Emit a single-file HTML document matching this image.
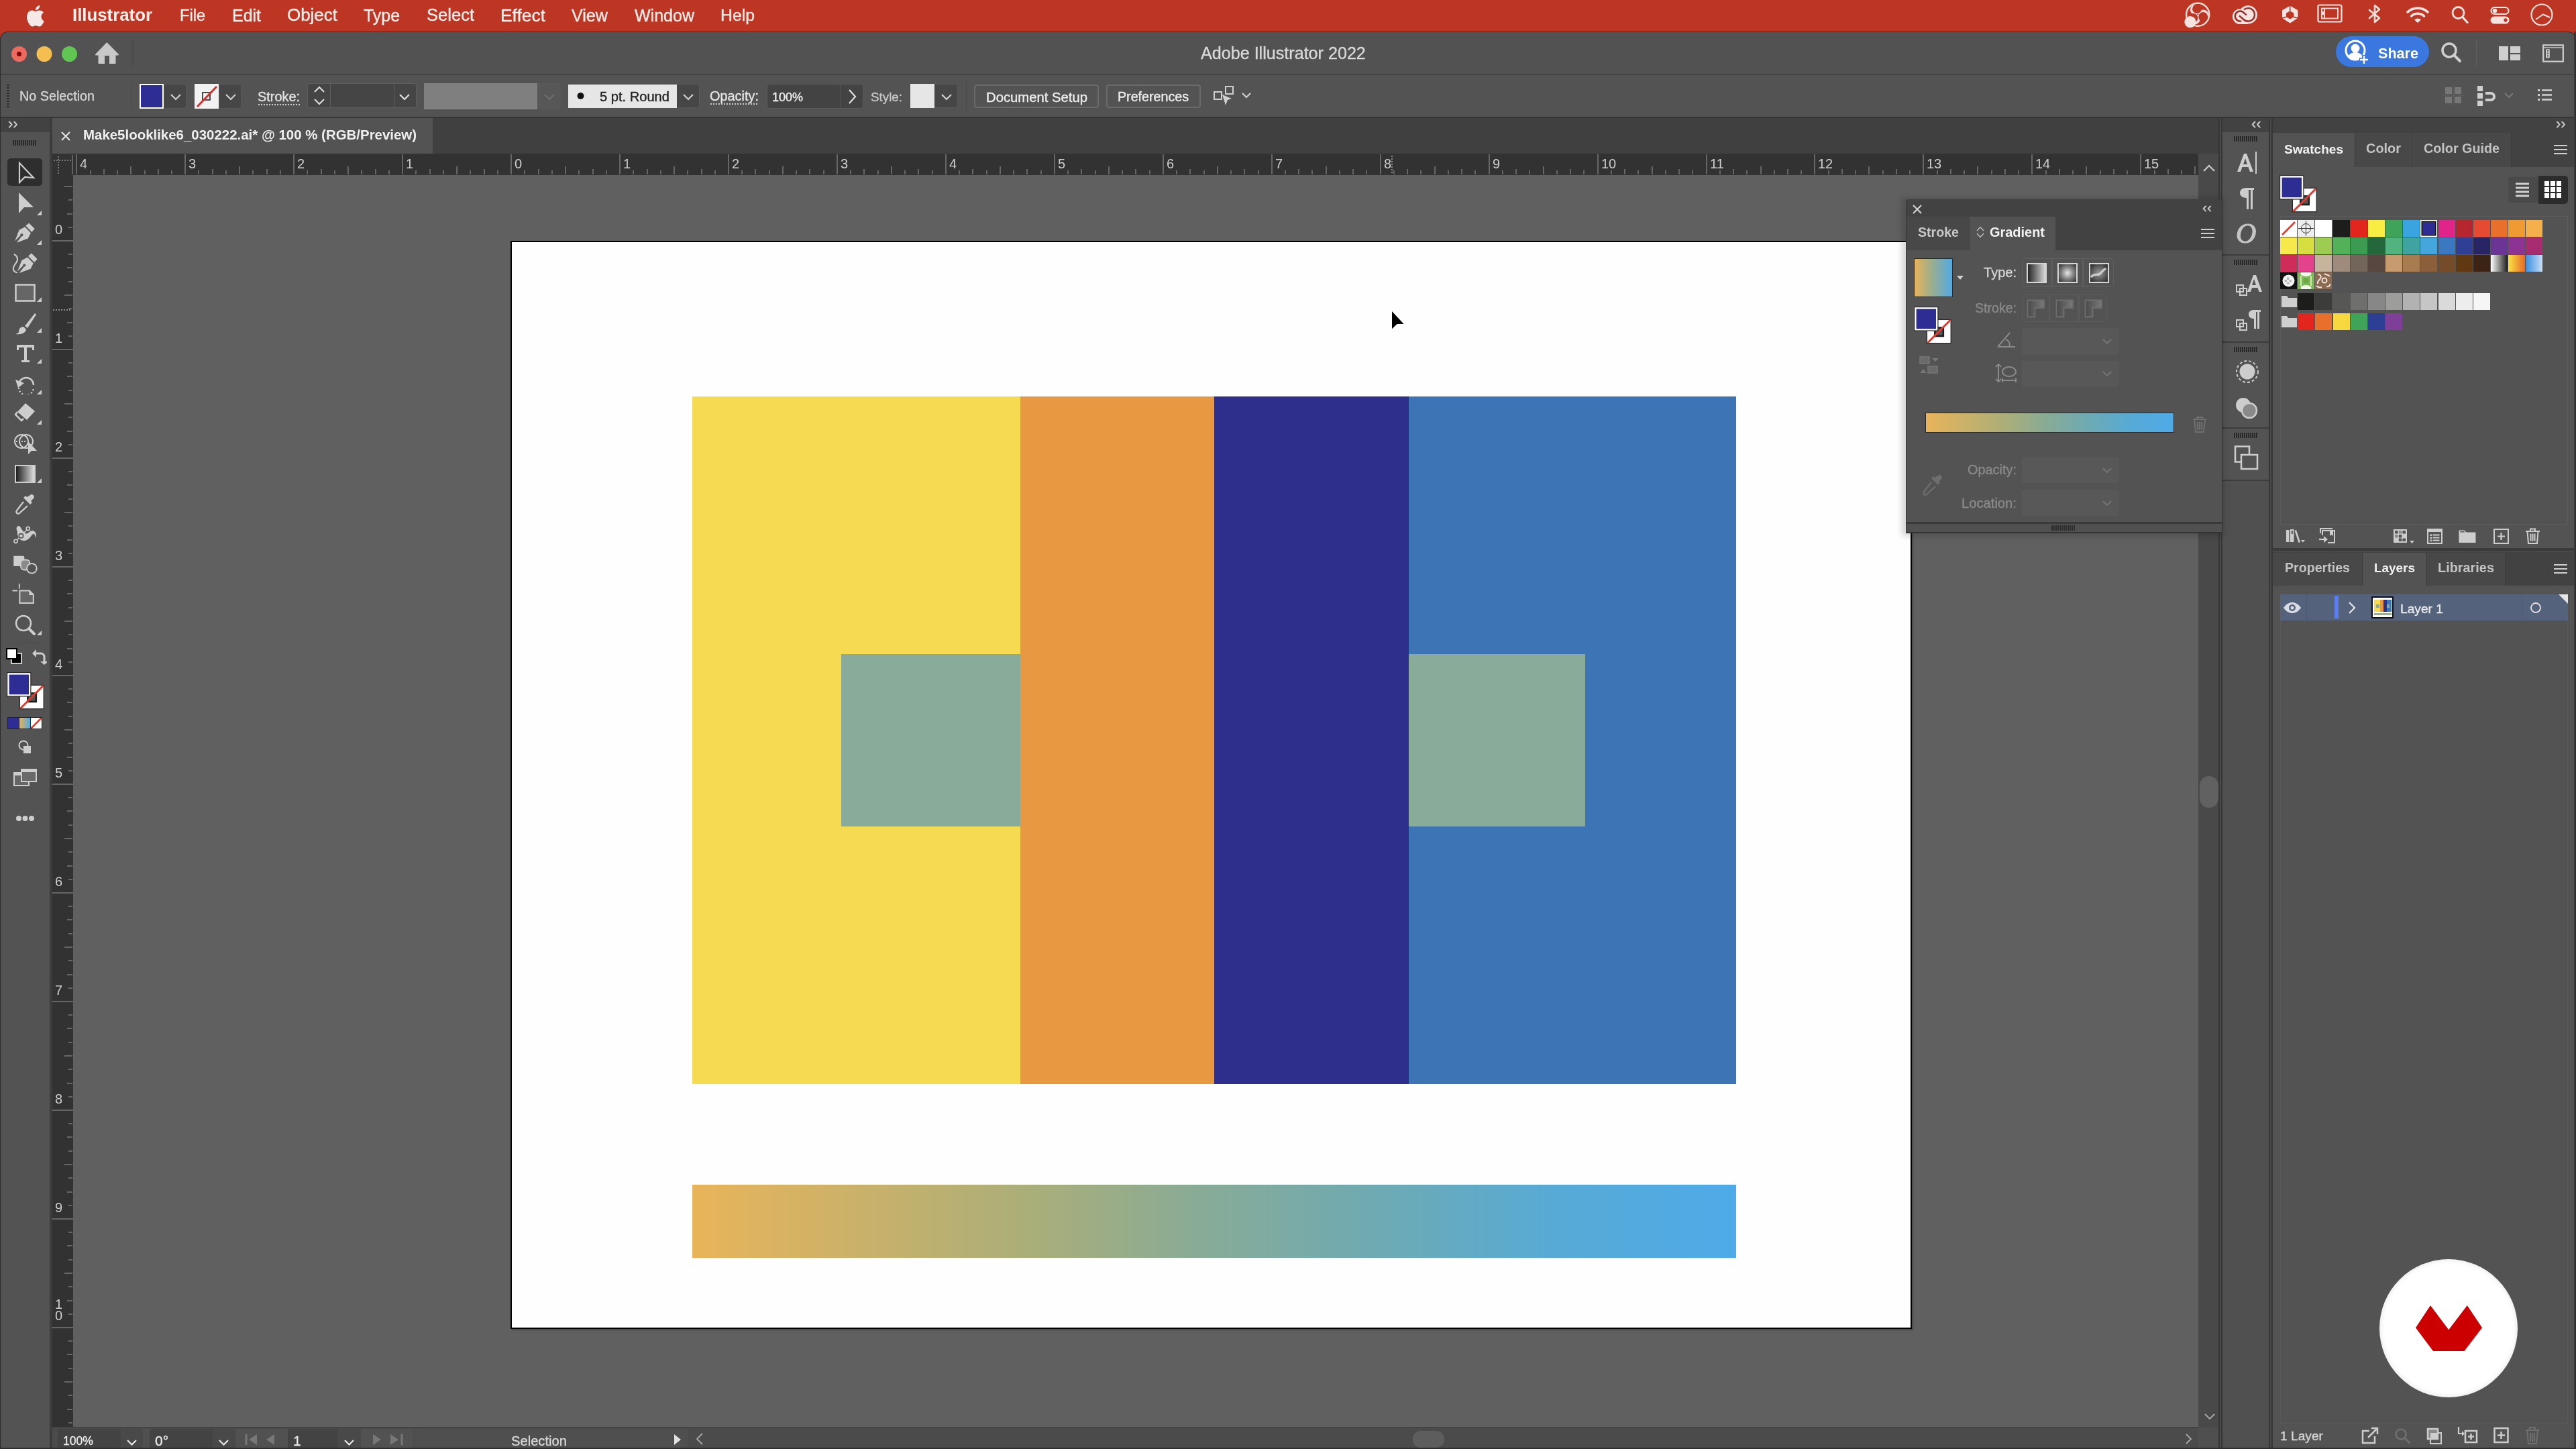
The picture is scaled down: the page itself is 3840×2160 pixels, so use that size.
<!DOCTYPE html>
<html><head><meta charset="utf-8"><style>
html,body{margin:0;padding:0;width:3840px;height:2160px;overflow:hidden;background:#535353;}
body>div{position:absolute;}
.t{position:absolute;white-space:nowrap;line-height:1;font-family:"Liberation Sans",sans-serif;will-change:transform;}
body{font-family:"Liberation Sans",sans-serif;}
</style></head><body>
<div style="left:0px;top:0px;width:3840px;height:62px;background:#bd3624;"></div><svg style="position:absolute;left:37px;top:3px;" width="34" height="40" viewBox="0 0 34 40"><path transform="translate(-2 -1) scale(1.18)" fill="#f4e9e6" d="M22.5 19.2c0-3.4 2.8-5 2.9-5.1-1.6-2.3-4-2.6-4.9-2.7-2.1-.2-4.1 1.2-5.1 1.2-1.1 0-2.7-1.2-4.4-1.2-2.3 0-4.4 1.3-5.6 3.4-2.4 4.1-.6 10.3 1.7 13.6 1.1 1.6 2.5 3.5 4.2 3.4 1.7-.1 2.3-1.1 4.4-1.1 2 0 2.6 1.1 4.4 1.1 1.8 0 3-1.7 4.1-3.3 1.3-1.9 1.8-3.7 1.8-3.8 0 0-3.5-1.3-3.5-5.5zM19.2 9.3c.9-1.1 1.6-2.7 1.4-4.3-1.4.1-3 .9-4 2-.9 1-1.6 2.6-1.4 4.2 1.5.1 3.1-.8 4-1.9z"/></svg><div class="t" style="left:108.0px;top:10.2px;font-size:25.80px;font-weight:bold;color:#fbeeea;">Illustrator</div><div class="t" style="left:268.0px;top:12.0px;font-size:23.58px;-webkit-text-stroke:0.35px #fbeeea;color:#fbeeea;">File</div><div class="t" style="left:346.0px;top:10.9px;font-size:24.95px;-webkit-text-stroke:0.35px #fbeeea;color:#fbeeea;">Edit</div><div class="t" style="left:428.0px;top:10.0px;font-size:25.95px;-webkit-text-stroke:0.35px #fbeeea;color:#fbeeea;">Object</div><div class="t" style="left:542.0px;top:10.9px;font-size:24.91px;-webkit-text-stroke:0.35px #fbeeea;color:#fbeeea;">Type</div><div class="t" style="left:636.0px;top:10.4px;font-size:25.55px;-webkit-text-stroke:0.35px #fbeeea;color:#fbeeea;">Select</div><div class="t" style="left:746.0px;top:9.7px;font-size:26.39px;-webkit-text-stroke:0.35px #fbeeea;color:#fbeeea;">Effect</div><div class="t" style="left:852.0px;top:10.7px;font-size:25.12px;-webkit-text-stroke:0.35px #fbeeea;color:#fbeeea;">View</div><div class="t" style="left:946.0px;top:10.8px;font-size:25.02px;-webkit-text-stroke:0.35px #fbeeea;color:#fbeeea;">Window</div><div class="t" style="left:1074.0px;top:11.0px;font-size:24.80px;-webkit-text-stroke:0.35px #fbeeea;color:#fbeeea;">Help</div><svg style="position:absolute;left:3255px;top:2px;" width="42" height="42" viewBox="0 0 42 42"><circle cx="21.2" cy="19.7" r="16" fill="#bd3624"/><circle cx="17.35" cy="12.46" r="7.6" fill="#f6e3df"/><circle cx="29.40" cy="19.99" r="7.6" fill="#f6e3df"/><circle cx="16.85" cy="26.65" r="7.6" fill="#f6e3df"/><circle cx="20.00" cy="11.18" r="6.9" fill="#bd3624"/><circle cx="29.17" cy="22.92" r="6.9" fill="#bd3624"/><circle cx="14.42" cy="24.99" r="6.9" fill="#bd3624"/><circle cx="21.2" cy="19.7" r="17.1" fill="none" stroke="#f6e3df" stroke-width="2.3"/><circle cx="9.9" cy="30.7" r="8.6" fill="#f6e3df"/></svg><svg style="position:absolute;left:3320px;top:2px;" width="55" height="40" viewBox="0 0 55 40"><g fill="#f6e3df"><circle cx="19.3" cy="22.6" r="11.4"/><circle cx="31.2" cy="19.9" r="13.7"/><rect x="19.3" y="20" width="11.9" height="14"/></g><g fill="none" stroke="#962b24" stroke-width="2.4"><path d="M18 21.3L24.27 26.83A9.8 9.8 0 1 0 24.9 12.4"/><path d="M28.7 20.4L23.05 15.6A7.5 7.5 0 1 0 21.24 29.34"/></g></svg><svg style="position:absolute;left:3395px;top:2px;" width="40" height="40" viewBox="0 0 40 40"><path d="M18.7 6.6L30.4 13.3V24.9L18.7 32.5 7 24.9V13.3z" fill="#f6e3df"/><path d="M18.7 14.5L24.4 17.6V23.3L18.7 26.5 13 23.3V17.6z" fill="#bd3624"/><path d="M18.7 5v9.7M31.5 25.3l-7.3-2M5.9 25.3l7.3-2" stroke="#9a2e26" stroke-width="1.5"/></svg><svg style="position:absolute;left:3454px;top:6px;" width="38" height="28" viewBox="0 0 38 28"><rect x="1.5" y="1.5" width="35" height="25" rx="2" fill="none" stroke="#f6e3df" stroke-width="2.2"/><rect x="7" y="6.5" width="24" height="15" fill="none" stroke="#f6e3df" stroke-width="1.8"/><path d="M11 6.5v15" stroke="#f6e3df" stroke-width="1.8"/><path d="M9 11v5" stroke="#f6e3df" stroke-width="2"/></svg><svg style="position:absolute;left:3529px;top:6px;" width="22" height="30" viewBox="0 0 22 30"><path d="M3 9l15 12-7 6V2l7 6L3 21" fill="none" stroke="#f6e3df" stroke-width="2.6" stroke-linejoin="round" stroke-linecap="round"/></svg><svg style="position:absolute;left:3587px;top:9px;" width="34" height="26" viewBox="0 0 34 26"><path d="M2 9a22 22 0 0 1 30 0" fill="none" stroke="#f6e3df" stroke-width="3.6" stroke-linecap="round"/><path d="M7.5 15a14 14 0 0 1 19 0" fill="none" stroke="#f6e3df" stroke-width="3.6" stroke-linecap="round"/><path d="M12 20.5a7 7 0 0 1 10 0L17 25z" fill="#f6e3df"/></svg><svg style="position:absolute;left:3652px;top:9px;" width="28" height="28" viewBox="0 0 28 28"><circle cx="12.5" cy="10" r="8.5" fill="none" stroke="#f6e3df" stroke-width="2.8"/><path d="M19 16.5l7 8" stroke="#f6e3df" stroke-width="3.2" stroke-linecap="round"/></svg><svg style="position:absolute;left:3712px;top:9px;" width="30" height="28" viewBox="0 0 30 28"><rect x="1.5" y="2" width="26" height="10" rx="5" fill="none" stroke="#f6e3df" stroke-width="2.2"/><circle cx="7" cy="7" r="3.3" fill="#f6e3df"/><rect x="0.5" y="15.5" width="28" height="11" rx="5.5" fill="#f6e3df"/><circle cx="23" cy="21" r="2.7" fill="#bd3624"/></svg><svg style="position:absolute;left:3771px;top:4px;" width="36" height="36" viewBox="0 0 36 36"><circle cx="18" cy="18" r="15.5" fill="none" stroke="#f6e3df" stroke-width="2.2"/><path d="M9 25l11-7.5 10 4.5" fill="none" stroke="#f6e3df" stroke-width="2"/></svg><div style="left:0px;top:47px;width:3840px;height:2113px;background:#535353;border-top-left-radius:12px;border-top-right-radius:12px;"></div><div style="left:0px;top:47px;width:3840px;height:64px;background:#525252;border-top-left-radius:12px;border-top-right-radius:12px;"></div><div style="left:0px;top:111px;width:3840px;height:1px;background:#363636;"></div><svg style="position:absolute;left:16px;top:68px;" width="100" height="26" viewBox="0 0 100 26"><circle cx="12.5" cy="12.5" r="11.5" fill="#ed6a5e"/><circle cx="12.5" cy="12.5" r="3.5" fill="#7e0508"/><circle cx="50" cy="12.5" r="11.5" fill="#f5bf4f"/><circle cx="87.5" cy="12.5" r="11.5" fill="#61c554"/></svg><svg style="position:absolute;left:141px;top:62px;" width="38" height="34" viewBox="0 0 38 34"><path d="M18.3 2.5L2 19.5h4.5V32h10V21h4v11h10V19.5H35z" fill="#c8c8c8" stroke="#c8c8c8" stroke-width="2" stroke-linejoin="round"/><rect x="15" y="21" width="7" height="13" fill="#525252"/></svg><div style="left:196px;top:60px;width:4px;height:37px;background:#4c4c4c;"></div><div class="t" style="left:1790.0px;top:66.7px;font-size:25.14px;-webkit-text-stroke:0.35px #d9d9d9;color:#d9d9d9;">Adobe Illustrator 2022</div><div style="left:3482px;top:54px;width:139px;height:46px;background:#3a77df;border-radius:23px;"></div><svg style="position:absolute;left:3493px;top:58px;" width="48" height="40" viewBox="0 0 48 40"><circle cx="18" cy="17" r="14" fill="none" stroke="#fff" stroke-width="3"/><circle cx="18" cy="14" r="6.5" fill="#fff"/><path d="M7 27c2-5 6-7 11-7s9 2 11 7c-3 3-7 4-11 4s-8-1-11-4z" fill="#fff"/><path d="M31 24v14M24 31h14" stroke="#3a77df" stroke-width="6"/><path d="M31 25v12M25 31h12" stroke="#fff" stroke-width="2.5"/></svg><div class="t" style="left:3545.0px;top:68.7px;font-size:21.59px;font-weight:bold;color:#ffffff;">Share</div><svg style="position:absolute;left:3638px;top:62px;" width="34" height="34" viewBox="0 0 34 34"><circle cx="13" cy="13" r="10" fill="none" stroke="#cfcfcf" stroke-width="3.5"/><path d="M20 20l9 9" stroke="#cfcfcf" stroke-width="4" stroke-linecap="round"/></svg><div style="left:3691px;top:60px;width:2px;height:38px;background:#5c5c5c;"></div><svg style="position:absolute;left:3725px;top:69px;" width="34" height="22" viewBox="0 0 34 22"><rect x="0" y="0" width="14" height="21" fill="#cfcfcf"/><rect x="17" y="0" width="15" height="10" fill="#cfcfcf"/><rect x="17" y="12" width="15" height="9" fill="#cfcfcf"/></svg><svg style="position:absolute;left:3790px;top:66px;" width="34" height="28" viewBox="0 0 34 28"><rect x="1.2" y="1.3" width="29.6" height="24.4" fill="none" stroke="#cfcfcf" stroke-width="2.2"/><path d="M1.2 4.9h29.6" stroke="#cfcfcf" stroke-width="1.3"/><rect x="5" y="7.2" width="5.8" height="13" rx="1.3" fill="#cfcfcf"/><g fill="#4a4a4a"><circle cx="7.9" cy="9.9" r="1.1"/><circle cx="7.9" cy="13.7" r="1.1"/><circle cx="7.9" cy="17.4" r="1.1"/></g></svg><div style="left:0px;top:112px;width:3840px;height:62px;background:#535353;"></div><div style="left:0px;top:174px;width:3840px;height:2px;background:#363636;"></div><div style="left:10px;top:126px;width:4px;height:36px;background:repeating-linear-gradient(#2e2e2e 0 2px,transparent 2px 4px);"></div><div class="t" style="left:29.0px;top:134.3px;font-size:19.75px;-webkit-text-stroke:0.35px #d4d4d4;color:#d4d4d4;">No Selection</div><div style="left:195px;top:120px;width:1px;height:46px;background:#4b4b4b;"></div><div style="left:208px;top:125px;width:36px;height:37px;background:#ffffff;"></div><div style="left:210px;top:127px;width:32px;height:33px;background:#2e2d93;"></div><div style="left:245px;top:125px;width:33px;height:37px;background:#464646;border:1.5px solid #595959;border-left:none;border-radius:0 5px 5px 0;box-sizing:border-box;"></div><svg style="position:absolute;left:254px;top:139px;" width="16" height="11" viewBox="0 0 16 11"><path d="M1 2l7.0 7.0l7.0 -7.0" fill="none" stroke="#d0d0d0" stroke-width="2.2"/></svg><div style="left:290px;top:125px;width:36px;height:37px;background:#f2f2f2;"></div><svg style="position:absolute;left:290px;top:125px;" width="36" height="37" viewBox="0 0 36 37"><rect x="12" y="13" width="11" height="11" fill="none" stroke="#222" stroke-width="1.6"/><path d="M4 34L33 4" stroke="#d42f2f" stroke-width="3"/></svg><div style="left:327px;top:125px;width:33px;height:37px;background:#464646;border:1.5px solid #595959;border-left:none;border-radius:0 5px 5px 0;box-sizing:border-box;"></div><svg style="position:absolute;left:336px;top:139px;" width="16" height="11" viewBox="0 0 16 11"><path d="M1 2l7.0 7.0l7.0 -7.0" fill="none" stroke="#d0d0d0" stroke-width="2.2"/></svg><div class="t" style="left:384.0px;top:135.2px;font-size:19.89px;-webkit-text-stroke:0.35px #e6e6e6;color:#e6e6e6;">Stroke:</div><div style="left:385px;top:155px;width:62px;height:2px;background:repeating-linear-gradient(90deg,#cfcfcf 0 2px,transparent 2px 4px);"></div><div style="left:458px;top:124px;width:163px;height:37px;background:#454545;border:1px solid #5e5e5e;border-radius:4px;box-sizing:border-box;"></div><div style="left:492px;top:125px;width:1px;height:35px;background:#5e5e5e;"></div><div style="left:587px;top:125px;width:1px;height:35px;background:#5e5e5e;"></div><svg style="position:absolute;left:467px;top:127px;" width="18" height="31" viewBox="0 0 18 31"><path d="M2 10l7-7 7 7M2 21l7 7 7-7" fill="none" stroke="#e0e0e0" stroke-width="2"/></svg><svg style="position:absolute;left:595px;top:139px;" width="16" height="11" viewBox="0 0 16 11"><path d="M1 2l7.0 7.0l7.0 -7.0" fill="none" stroke="#e0e0e0" stroke-width="2.2"/></svg><div style="left:632px;top:124px;width:169px;height:39px;background:#7f7f7f;"></div><div style="left:801px;top:124px;width:35px;height:39px;background:#575757;border-radius:0 4px 4px 0;"></div><svg style="position:absolute;left:811px;top:139px;" width="16" height="11" viewBox="0 0 16 11"><path d="M1 2l7.0 7.0l7.0 -7.0" fill="none" stroke="#6e6e6e" stroke-width="2.2"/></svg><div style="left:847px;top:126px;width:162px;height:35px;background:#e6e6e6;"></div><svg style="position:absolute;left:857px;top:135px;" width="18" height="18" viewBox="0 0 18 18"><circle cx="8.5" cy="8" r="5" fill="#111"/></svg><div class="t" style="left:894.0px;top:134.0px;font-size:20.12px;-webkit-text-stroke:0.35px #1e1e1e;color:#1e1e1e;">5 pt. Round</div><div style="left:1009px;top:125px;width:34px;height:36px;background:#464646;border:1.5px solid #595959;border-left:none;border-radius:0 5px 5px 0;box-sizing:border-box;"></div><svg style="position:absolute;left:1018px;top:139px;" width="16" height="11" viewBox="0 0 16 11"><path d="M1 2l7.0 7.0l7.0 -7.0" fill="none" stroke="#d0d0d0" stroke-width="2.2"/></svg><div class="t" style="left:1058.0px;top:134.2px;font-size:19.90px;-webkit-text-stroke:0.35px #e6e6e6;color:#e6e6e6;">Opacity:</div><div style="left:1059px;top:154px;width:72px;height:2px;background:repeating-linear-gradient(90deg,#cfcfcf 0 2px,transparent 2px 4px);"></div><div style="left:1143px;top:125px;width:144px;height:37px;background:#434343;border:1px solid #5a5a5a;border-radius:4px;box-sizing:border-box;"></div><div style="left:1253px;top:126px;width:1px;height:35px;background:#5a5a5a;"></div><div class="t" style="left:1151.0px;top:135.8px;font-size:17.99px;-webkit-text-stroke:0.35px #f0f0f0;color:#f0f0f0;">100%</div><svg style="position:absolute;left:1264px;top:132px;" width="14" height="24" viewBox="0 0 14 24"><path d="M2 2l9 10-9 10" fill="none" stroke="#e0e0e0" stroke-width="2.2"/></svg><div class="t" style="left:1298.0px;top:136.1px;font-size:18.79px;-webkit-text-stroke:0.35px #c8c8c8;color:#c8c8c8;">Style:</div><div style="left:1357px;top:125px;width:36px;height:36px;background:#e6e6e6;"></div><div style="left:1393px;top:125px;width:35px;height:36px;background:#464646;border:1.5px solid #595959;border-left:none;border-radius:0 5px 5px 0;box-sizing:border-box;"></div><svg style="position:absolute;left:1403px;top:139px;" width="16" height="11" viewBox="0 0 16 11"><path d="M1 2l7.0 7.0l7.0 -7.0" fill="none" stroke="#d0d0d0" stroke-width="2.2"/></svg><div style="left:1440px;top:120px;width:1px;height:46px;background:#4b4b4b;"></div><div style="left:1452px;top:126px;width:186px;height:35px;background:#535353;border:2px solid #6a6a6a;border-radius:4px;box-sizing:border-box;"></div><div class="t" style="left:1470.0px;top:134.8px;font-size:20.27px;-webkit-text-stroke:0.35px #eeeeee;color:#eeeeee;">Document Setup</div><div style="left:1649px;top:126px;width:141px;height:35px;background:#535353;border:2px solid #6a6a6a;border-radius:4px;box-sizing:border-box;"></div><div class="t" style="left:1666.0px;top:135.4px;font-size:19.66px;-webkit-text-stroke:0.35px #eeeeee;color:#eeeeee;">Preferences</div><svg style="position:absolute;left:1808px;top:127px;" width="34" height="34" viewBox="0 0 34 34"><rect x="2" y="10" width="11" height="11" fill="none" stroke="#cfcfcf" stroke-width="2"/><rect x="19" y="2" width="11" height="11" fill="none" stroke="#cfcfcf" stroke-width="2"/><path d="M14 14l14 6-6 2-3 8z" fill="#cfcfcf"/></svg><svg style="position:absolute;left:1851px;top:137px;" width="14" height="10" viewBox="0 0 14 10"><path d="M1 2l6.0 6.0l6.0 -6.0" fill="none" stroke="#cfcfcf" stroke-width="2.2"/></svg><svg style="position:absolute;left:3641px;top:127px;" width="34" height="30" viewBox="0 0 34 30"><rect x="4" y="3" width="10" height="10" fill="#777"/><rect x="18" y="3" width="10" height="10" fill="#777"/><rect x="4" y="17" width="10" height="10" fill="#777"/><rect x="18" y="17" width="10" height="10" fill="#777"/><path d="M16 0v30M0 15h32" stroke="#5f5f5f" stroke-width="1.5"/></svg><svg style="position:absolute;left:3692px;top:128px;" width="30" height="30" viewBox="0 0 30 30"><rect x="1" y="0" width="8" height="8" fill="#cfcfcf"/><rect x="1" y="11" width="8" height="8" fill="#cfcfcf"/><rect x="1" y="22" width="8" height="8" fill="#cfcfcf"/><path d="M13 11h8a5 5 0 0 1 0 10h-8" fill="none" stroke="#cfcfcf" stroke-width="4"/></svg><svg style="position:absolute;left:3733px;top:137px;" width="14" height="10" viewBox="0 0 14 10"><path d="M1 2l6.0 6.0l6.0 -6.0" fill="none" stroke="#777" stroke-width="2.2"/></svg><svg style="position:absolute;left:3783px;top:133px;" width="24" height="18" viewBox="0 0 24 18"><rect x="0" y="0" width="3" height="3" fill="#cfcfcf"/><rect x="0" y="7" width="3" height="3" fill="#cfcfcf"/><rect x="0" y="14" width="3" height="3" fill="#cfcfcf"/><path d="M6 1.5h15M6 8.5h15M6 15.5h15" stroke="#cfcfcf" stroke-width="2.5"/></svg><div style="left:0px;top:176px;width:74px;height:1952px;background:#535353;"></div><div style="left:0px;top:176px;width:74px;height:21px;background:#424242;"></div><div class="t" style="left:12.0px;top:174.4px;font-size:22.00px;-webkit-text-stroke:0.35px #cfcfcf;color:#cfcfcf;">&#8250;&#8250;</div><div style="left:19px;top:209px;width:36px;height:8px;background:repeating-linear-gradient(90deg,#2a2a2a 0 2px,transparent 2px 3px);"></div><div style="left:74px;top:176px;width:4px;height:1984px;background:#3c3c3c;"></div><div style="left:11px;top:236px;width:52px;height:41px;background:#2e2e2e;border-radius:5px;"></div><svg style="position:absolute;left:26px;top:240px;" width="28" height="36" viewBox="0 0 28 36"><path d="M3 3v29l8-8 13 1z" fill="none" stroke="#cdcdcd" stroke-width="2.2" stroke-linejoin="miter"/></svg><svg style="position:absolute;left:26px;top:285px;" width="28" height="36" viewBox="0 0 28 36"><path d="M2 2v31l8-9h14z" fill="#cdcdcd"/></svg><svg style="position:absolute;left:55px;top:314px;" width="8" height="8" viewBox="0 0 8 8"><path d="M7 0v7h-7z" fill="#cdcdcd"/></svg><svg style="position:absolute;left:10px;top:320px;" width="60" height="100" viewBox="0 0 60 100"><g transform="translate(-10 -320)"><g transform="translate(0 0)"><path d="M38.3 336.6L43.1 332.4 51.8 341.1 47.3 345.9z" fill="#cdcdcd"/><path d="M28.6 342.8L37.2 338.2 45.9 347.3 41.8 355.6 24.8 361.8 32.2 352.2a2 2 0 1 0-1.6-1.4L22.2 359.2z" fill="#cdcdcd"/></g><g transform="translate(3.8 45.2)"><path d="M38.3 336.6L43.1 332.4 51.8 341.1 47.3 345.9z" fill="#cdcdcd"/><path d="M28.6 342.8L37.2 338.2 45.9 347.3 41.8 355.6 24.8 361.8 32.2 352.2a2 2 0 1 0-1.6-1.4L22.2 359.2z" fill="#cdcdcd"/></g><path d="M20.8 379c4 2 6 5 5 9-1 5-6 7-6 12 0 4 3 6 6 6.5" fill="none" stroke="#cdcdcd" stroke-width="2"/></g></svg><svg style="position:absolute;left:55px;top:358px;" width="8" height="8" viewBox="0 0 8 8"><path d="M7 0v7h-7z" fill="#cdcdcd"/></svg><svg style="position:absolute;left:22px;top:423px;" width="32" height="28" viewBox="0 0 32 28"><rect x="1.5" y="1.5" width="28" height="24" fill="#666" stroke="#cdcdcd" stroke-width="2.5"/></svg><svg style="position:absolute;left:55px;top:443px;" width="8" height="8" viewBox="0 0 8 8"><path d="M7 0v7h-7z" fill="#cdcdcd"/></svg><svg style="position:absolute;left:21px;top:465px;" width="34" height="34" viewBox="0 0 34 34"><path d="M31 2L16 21l4 3L33 4z" fill="#cdcdcd"/><path d="M14 22c-5 0-7 4-7 8-1 2-3 2-5 3 8 1 15-1 16-7z" fill="#cdcdcd"/></svg><svg style="position:absolute;left:55px;top:489px;" width="8" height="8" viewBox="0 0 8 8"><path d="M7 0v7h-7z" fill="#cdcdcd"/></svg><svg style="position:absolute;left:23px;top:512px;" width="30" height="30" viewBox="0 0 30 30"><path d="M2 2h26v8h-3V6h-8v19h4v3H9v-3h4V6H5v4H2z" fill="#cdcdcd"/></svg><svg style="position:absolute;left:55px;top:535px;" width="8" height="8" viewBox="0 0 8 8"><path d="M7 0v7h-7z" fill="#cdcdcd"/></svg><svg style="position:absolute;left:22px;top:556px;" width="32" height="32" viewBox="0 0 32 32"><path d="M6 18a11 11 0 1 1 22 0" fill="none" stroke="#cdcdcd" stroke-width="2.5"/><path d="M1 10l4 12 9-7z" fill="#cdcdcd"/><path d="M6 22a11 11 0 0 0 22 0" fill="none" stroke="#cdcdcd" stroke-width="2.5" stroke-dasharray="2 3"/></svg><svg style="position:absolute;left:55px;top:581px;" width="8" height="8" viewBox="0 0 8 8"><path d="M7 0v7h-7z" fill="#cdcdcd"/></svg><svg style="position:absolute;left:21px;top:599px;" width="34" height="35" viewBox="0 0 34 35"><path d="M17 2l14 12-12 13-14-12z" fill="#cdcdcd"/><path d="M5 15l-3 4 9 9 3-3" fill="none" stroke="#cdcdcd" stroke-width="2.5"/></svg><svg style="position:absolute;left:55px;top:626px;" width="8" height="8" viewBox="0 0 8 8"><path d="M7 0v7h-7z" fill="#cdcdcd"/></svg><svg style="position:absolute;left:19px;top:645px;" width="40" height="34" viewBox="0 0 40 34"><circle cx="13" cy="13" r="10" fill="none" stroke="#cdcdcd" stroke-width="2"/><circle cx="20" cy="13" r="10" fill="none" stroke="#cdcdcd" stroke-width="2"/><path d="M5 13h14" stroke="#cdcdcd" stroke-width="2" stroke-dasharray="2 2"/><path d="M23 13v19l5-5h8z" fill="#cdcdcd"/></svg><div style="left:22px;top:693px;width:31px;height:27px;box-sizing:border-box;border:2px solid #cdcdcd;background:linear-gradient(90deg,#1e1e1e,#dedede);"></div><svg style="position:absolute;left:55px;top:713px;" width="8" height="8" viewBox="0 0 8 8"><path d="M7 0v7h-7z" fill="#cdcdcd"/></svg><svg style="position:absolute;left:21px;top:735px;" width="34" height="34" viewBox="0 0 34 34"><path d="M24 3c3-3 8 2 5 5l-4 4 2 2-3 3-10-10 3-3 2 2z" fill="#cdcdcd"/><path d="M14 13L4 26c-2 3 1 6 4 4l12-11" fill="none" stroke="#cdcdcd" stroke-width="2.2"/></svg><svg style="position:absolute;left:10px;top:775px;" width="60" height="130" viewBox="0 0 60 130"><g transform="translate(-10 -775)"><path d="M24.8 789.8C24 786 26 783.6 28.4 784.2 30.8 784.8 31.6 788 33.3 790.2 35 792.6 37 795 39.6 795.6 42.5 795 45 791 48.6 791.1 51.5 791.2 53.5 794 54 797.5L53.9 801.9C52.8 800 52 797 50.4 795.6 48 796 46.5 800 44.1 801.9 41.5 804 39 805.9 36.9 805.9 33.5 806 30.8 805.5 29.7 803.7 27.5 801 26.3 798.5 26.1 796.5 25.8 794 26 791.5 24.8 789.8z" fill="#cdcdcd"/><path d="M23.5 806.8L41.8 788" stroke="#cdcdcd" stroke-width="1.6"/><circle cx="23.5" cy="806.8" r="2.6" fill="#535353" stroke="#cdcdcd" stroke-width="1.6"/><circle cx="41.8" cy="788" r="2.6" fill="#535353" stroke="#cdcdcd" stroke-width="1.6"/><circle cx="31.5" cy="798.8" r="3.2" fill="none" stroke="#535353" stroke-width="1.6"/><path d="M20.3 828.8h14a2 2 0 0 1 2 2V844H20.3z" fill="#cdcdcd"/><rect x="31" y="834.5" width="13.5" height="15" rx="5" fill="#8a8a8a" stroke="#cdcdcd" stroke-width="1.8"/><circle cx="47.4" cy="847.3" r="7.3" fill="#535353" stroke="#cdcdcd" stroke-width="2"/><path d="M28.8 870v7.5M18.5 880.5h7.5" stroke="#cdcdcd" stroke-width="1.8"/><path d="M29.4 880.5h14.5l5.9 6v12.4H29.4z" fill="#666" stroke="#cdcdcd" stroke-width="2"/><path d="M43.4 880.5l6.4 6.4h-6.4z" fill="#cdcdcd"/></g></svg><svg style="position:absolute;left:21px;top:915px;" width="38" height="34" viewBox="0 0 38 34"><circle cx="14" cy="14" r="11" fill="none" stroke="#cdcdcd" stroke-width="2.5"/><path d="M22 22l8 8" stroke="#cdcdcd" stroke-width="4" stroke-linecap="round"/></svg><svg style="position:absolute;left:55px;top:940px;" width="8" height="8" viewBox="0 0 8 8"><path d="M7 0v7h-7z" fill="#cdcdcd"/></svg><div style="left:12px;top:958px;width:50px;height:1px;background:#4c4c4c;"></div><svg style="position:absolute;left:9px;top:966px;" width="24" height="24" viewBox="0 0 24 24"><rect x="1" y="1" width="15" height="15" fill="#fff" stroke="#000" stroke-width="2"/><rect x="8" y="8" width="15" height="15" fill="#000" stroke="#fff" stroke-width="1.5"/><rect x="10.5" y="10.5" width="5" height="5" fill="#fff" stroke="none"/><rect x="1" y="1" width="15" height="15" fill="#fff" stroke="#000" stroke-width="2"/></svg><svg style="position:absolute;left:48px;top:968px;" width="22" height="23" viewBox="0 0 22 23"><path d="M3 6h10a5 5 0 0 1 5 5v8" fill="none" stroke="#cdcdcd" stroke-width="3"/><path d="M0 6l6-6v12zM12 18h12l-6 5z" fill="#cdcdcd"/></svg><svg style="position:absolute;left:10px;top:1002px;" width="56" height="57" viewBox="0 0 56 57"><rect x="19.4" y="19.4" width="35.8" height="35.3" fill="#fff" stroke="#2a2a2a" stroke-width="1.3"/><rect x="31.3" y="31.5" width="12.5" height="12.5" fill="#555" stroke="#1e1e1e" stroke-width="2.6"/><path d="M20.5 54L54.5 20" stroke="#de3a2e" stroke-width="3"/><rect x="0.6" y="0.6" width="35.3" height="35.4" fill="#fff" stroke="#2a2a2a" stroke-width="1.2"/><rect x="3.6" y="3.6" width="29.4" height="29.6" fill="#2e2d93"/></svg><div style="left:11px;top:1069px;width:52px;height:18px;background:#222;"></div><div style="left:12px;top:1070px;width:16px;height:16px;background:#2e2d93;"></div><div style="left:29px;top:1070px;width:16px;height:16px;background:linear-gradient(90deg,#e8b35a,#50aae4);"></div><svg style="position:absolute;left:46px;top:1070px;" width="16" height="16" viewBox="0 0 16 16"><rect width="16" height="16" fill="#fff"/><path d="M0 16L16 0" stroke="#d93a2e" stroke-width="2.5"/></svg><svg style="position:absolute;left:27px;top:1103px;" width="22" height="22" viewBox="0 0 22 22"><circle cx="8" cy="8" r="6.5" fill="none" stroke="#cdcdcd" stroke-width="2"/><rect x="8" y="9" width="11" height="11" fill="#cdcdcd"/></svg><svg style="position:absolute;left:20px;top:1146px;" width="36" height="27" viewBox="0 0 36 27"><rect x="1" y="6" width="22" height="19" fill="#666" stroke="#cdcdcd" stroke-width="2"/><rect x="12" y="1" width="22" height="18" fill="#6a6a6a" stroke="#cdcdcd" stroke-width="2"/><rect x="12" y="1" width="22" height="4" fill="#cdcdcd"/><rect x="1" y="6" width="11" height="4" fill="#cdcdcd"/></svg><svg style="position:absolute;left:23px;top:1213px;" width="30" height="14" viewBox="0 0 30 14"><circle cx="5" cy="7" r="4" fill="#cdcdcd"/><circle cx="14.5" cy="7" r="4" fill="#cdcdcd"/><circle cx="24" cy="7" r="4" fill="#cdcdcd"/></svg><div style="left:78px;top:176px;width:3230px;height:53px;background:#404040;"></div><div style="left:78px;top:176px;width:567px;height:53px;background:#535353;"></div><svg style="position:absolute;left:90px;top:195px;" width="16" height="16" viewBox="0 0 16 16"><path d="M2 2l12 12M14 2L2 14" stroke="#e6e6e6" stroke-width="2"/></svg><div class="t" style="left:124.0px;top:190.7px;font-size:20.44px;font-weight:bold;color:#efefef;">Make5looklike6_030222.ai* @ 100 % (RGB/Preview)</div><div style="left:78px;top:229px;width:3199px;height:32px;background:#323232;"></div><div style="left:78px;top:229px;width:31px;height:1899px;background:#323232;"></div><div style="left:109px;top:261px;width:3168px;height:1867px;background:#606060;"></div><div style="left:113px;top:230px;width:2px;height:30px;background:#666"></div>
<div style="left:134px;top:254px;width:2px;height:6px;background:#666"></div>
<div style="left:154px;top:252px;width:2px;height:8px;background:#666"></div>
<div style="left:174px;top:254px;width:2px;height:6px;background:#666"></div>
<div style="left:194px;top:248px;width:2px;height:12px;background:#666"></div>
<div style="left:215px;top:254px;width:2px;height:6px;background:#666"></div>
<div style="left:235px;top:252px;width:2px;height:8px;background:#666"></div>
<div style="left:255px;top:254px;width:2px;height:6px;background:#666"></div>
<div class="t" style="left:119px;top:234.1px;font-size:20px;color:#cfcfcf">4</div>
<div style="left:275px;top:230px;width:2px;height:30px;background:#666"></div>
<div style="left:295px;top:254px;width:2px;height:6px;background:#666"></div>
<div style="left:316px;top:252px;width:2px;height:8px;background:#666"></div>
<div style="left:336px;top:254px;width:2px;height:6px;background:#666"></div>
<div style="left:356px;top:248px;width:2px;height:12px;background:#666"></div>
<div style="left:376px;top:254px;width:2px;height:6px;background:#666"></div>
<div style="left:397px;top:252px;width:2px;height:8px;background:#666"></div>
<div style="left:417px;top:254px;width:2px;height:6px;background:#666"></div>
<div class="t" style="left:281px;top:234.1px;font-size:20px;color:#cfcfcf">3</div>
<div style="left:437px;top:230px;width:2px;height:30px;background:#666"></div>
<div style="left:457px;top:254px;width:2px;height:6px;background:#666"></div>
<div style="left:478px;top:252px;width:2px;height:8px;background:#666"></div>
<div style="left:498px;top:254px;width:2px;height:6px;background:#666"></div>
<div style="left:518px;top:248px;width:2px;height:12px;background:#666"></div>
<div style="left:538px;top:254px;width:2px;height:6px;background:#666"></div>
<div style="left:559px;top:252px;width:2px;height:8px;background:#666"></div>
<div style="left:579px;top:254px;width:2px;height:6px;background:#666"></div>
<div class="t" style="left:443px;top:234.1px;font-size:20px;color:#cfcfcf">2</div>
<div style="left:599px;top:230px;width:2px;height:30px;background:#666"></div>
<div style="left:619px;top:254px;width:2px;height:6px;background:#666"></div>
<div style="left:640px;top:252px;width:2px;height:8px;background:#666"></div>
<div style="left:660px;top:254px;width:2px;height:6px;background:#666"></div>
<div style="left:680px;top:248px;width:2px;height:12px;background:#666"></div>
<div style="left:700px;top:254px;width:2px;height:6px;background:#666"></div>
<div style="left:721px;top:252px;width:2px;height:8px;background:#666"></div>
<div style="left:741px;top:254px;width:2px;height:6px;background:#666"></div>
<div class="t" style="left:605px;top:234.1px;font-size:20px;color:#cfcfcf">1</div>
<div style="left:761px;top:230px;width:2px;height:30px;background:#666"></div>
<div style="left:781px;top:254px;width:2px;height:6px;background:#666"></div>
<div style="left:802px;top:252px;width:2px;height:8px;background:#666"></div>
<div style="left:822px;top:254px;width:2px;height:6px;background:#666"></div>
<div style="left:842px;top:248px;width:2px;height:12px;background:#666"></div>
<div style="left:862px;top:254px;width:2px;height:6px;background:#666"></div>
<div style="left:883px;top:252px;width:2px;height:8px;background:#666"></div>
<div style="left:903px;top:254px;width:2px;height:6px;background:#666"></div>
<div class="t" style="left:767px;top:234.1px;font-size:20px;color:#cfcfcf">0</div>
<div style="left:923px;top:230px;width:2px;height:30px;background:#666"></div>
<div style="left:943px;top:254px;width:2px;height:6px;background:#666"></div>
<div style="left:964px;top:252px;width:2px;height:8px;background:#666"></div>
<div style="left:984px;top:254px;width:2px;height:6px;background:#666"></div>
<div style="left:1004px;top:248px;width:2px;height:12px;background:#666"></div>
<div style="left:1024px;top:254px;width:2px;height:6px;background:#666"></div>
<div style="left:1045px;top:252px;width:2px;height:8px;background:#666"></div>
<div style="left:1065px;top:254px;width:2px;height:6px;background:#666"></div>
<div class="t" style="left:929px;top:234.1px;font-size:20px;color:#cfcfcf">1</div>
<div style="left:1085px;top:230px;width:2px;height:30px;background:#666"></div>
<div style="left:1105px;top:254px;width:2px;height:6px;background:#666"></div>
<div style="left:1125px;top:252px;width:2px;height:8px;background:#666"></div>
<div style="left:1146px;top:254px;width:2px;height:6px;background:#666"></div>
<div style="left:1166px;top:248px;width:2px;height:12px;background:#666"></div>
<div style="left:1186px;top:254px;width:2px;height:6px;background:#666"></div>
<div style="left:1206px;top:252px;width:2px;height:8px;background:#666"></div>
<div style="left:1227px;top:254px;width:2px;height:6px;background:#666"></div>
<div class="t" style="left:1091px;top:234.1px;font-size:20px;color:#cfcfcf">2</div>
<div style="left:1247px;top:230px;width:2px;height:30px;background:#666"></div>
<div style="left:1267px;top:254px;width:2px;height:6px;background:#666"></div>
<div style="left:1287px;top:252px;width:2px;height:8px;background:#666"></div>
<div style="left:1308px;top:254px;width:2px;height:6px;background:#666"></div>
<div style="left:1328px;top:248px;width:2px;height:12px;background:#666"></div>
<div style="left:1348px;top:254px;width:2px;height:6px;background:#666"></div>
<div style="left:1368px;top:252px;width:2px;height:8px;background:#666"></div>
<div style="left:1389px;top:254px;width:2px;height:6px;background:#666"></div>
<div class="t" style="left:1253px;top:234.1px;font-size:20px;color:#cfcfcf">3</div>
<div style="left:1409px;top:230px;width:2px;height:30px;background:#666"></div>
<div style="left:1429px;top:254px;width:2px;height:6px;background:#666"></div>
<div style="left:1449px;top:252px;width:2px;height:8px;background:#666"></div>
<div style="left:1470px;top:254px;width:2px;height:6px;background:#666"></div>
<div style="left:1490px;top:248px;width:2px;height:12px;background:#666"></div>
<div style="left:1510px;top:254px;width:2px;height:6px;background:#666"></div>
<div style="left:1530px;top:252px;width:2px;height:8px;background:#666"></div>
<div style="left:1551px;top:254px;width:2px;height:6px;background:#666"></div>
<div class="t" style="left:1415px;top:234.1px;font-size:20px;color:#cfcfcf">4</div>
<div style="left:1571px;top:230px;width:2px;height:30px;background:#666"></div>
<div style="left:1591px;top:254px;width:2px;height:6px;background:#666"></div>
<div style="left:1611px;top:252px;width:2px;height:8px;background:#666"></div>
<div style="left:1632px;top:254px;width:2px;height:6px;background:#666"></div>
<div style="left:1652px;top:248px;width:2px;height:12px;background:#666"></div>
<div style="left:1672px;top:254px;width:2px;height:6px;background:#666"></div>
<div style="left:1692px;top:252px;width:2px;height:8px;background:#666"></div>
<div style="left:1713px;top:254px;width:2px;height:6px;background:#666"></div>
<div class="t" style="left:1577px;top:234.1px;font-size:20px;color:#cfcfcf">5</div>
<div style="left:1733px;top:230px;width:2px;height:30px;background:#666"></div>
<div style="left:1753px;top:254px;width:2px;height:6px;background:#666"></div>
<div style="left:1773px;top:252px;width:2px;height:8px;background:#666"></div>
<div style="left:1794px;top:254px;width:2px;height:6px;background:#666"></div>
<div style="left:1814px;top:248px;width:2px;height:12px;background:#666"></div>
<div style="left:1834px;top:254px;width:2px;height:6px;background:#666"></div>
<div style="left:1854px;top:252px;width:2px;height:8px;background:#666"></div>
<div style="left:1875px;top:254px;width:2px;height:6px;background:#666"></div>
<div class="t" style="left:1739px;top:234.1px;font-size:20px;color:#cfcfcf">6</div>
<div style="left:1895px;top:230px;width:2px;height:30px;background:#666"></div>
<div style="left:1915px;top:254px;width:2px;height:6px;background:#666"></div>
<div style="left:1935px;top:252px;width:2px;height:8px;background:#666"></div>
<div style="left:1955px;top:254px;width:2px;height:6px;background:#666"></div>
<div style="left:1976px;top:248px;width:2px;height:12px;background:#666"></div>
<div style="left:1996px;top:254px;width:2px;height:6px;background:#666"></div>
<div style="left:2016px;top:252px;width:2px;height:8px;background:#666"></div>
<div style="left:2036px;top:254px;width:2px;height:6px;background:#666"></div>
<div class="t" style="left:1901px;top:234.1px;font-size:20px;color:#cfcfcf">7</div>
<div style="left:2057px;top:230px;width:2px;height:30px;background:#666"></div>
<div style="left:2077px;top:254px;width:2px;height:6px;background:#666"></div>
<div style="left:2097px;top:252px;width:2px;height:8px;background:#666"></div>
<div style="left:2117px;top:254px;width:2px;height:6px;background:#666"></div>
<div style="left:2138px;top:248px;width:2px;height:12px;background:#666"></div>
<div style="left:2158px;top:254px;width:2px;height:6px;background:#666"></div>
<div style="left:2178px;top:252px;width:2px;height:8px;background:#666"></div>
<div style="left:2198px;top:254px;width:2px;height:6px;background:#666"></div>
<div class="t" style="left:2063px;top:234.1px;font-size:20px;color:#cfcfcf">8</div>
<div style="left:2219px;top:230px;width:2px;height:30px;background:#666"></div>
<div style="left:2239px;top:254px;width:2px;height:6px;background:#666"></div>
<div style="left:2259px;top:252px;width:2px;height:8px;background:#666"></div>
<div style="left:2279px;top:254px;width:2px;height:6px;background:#666"></div>
<div style="left:2300px;top:248px;width:2px;height:12px;background:#666"></div>
<div style="left:2320px;top:254px;width:2px;height:6px;background:#666"></div>
<div style="left:2340px;top:252px;width:2px;height:8px;background:#666"></div>
<div style="left:2360px;top:254px;width:2px;height:6px;background:#666"></div>
<div class="t" style="left:2225px;top:234.1px;font-size:20px;color:#cfcfcf">9</div>
<div style="left:2381px;top:230px;width:2px;height:30px;background:#666"></div>
<div style="left:2401px;top:254px;width:2px;height:6px;background:#666"></div>
<div style="left:2421px;top:252px;width:2px;height:8px;background:#666"></div>
<div style="left:2441px;top:254px;width:2px;height:6px;background:#666"></div>
<div style="left:2462px;top:248px;width:2px;height:12px;background:#666"></div>
<div style="left:2482px;top:254px;width:2px;height:6px;background:#666"></div>
<div style="left:2502px;top:252px;width:2px;height:8px;background:#666"></div>
<div style="left:2522px;top:254px;width:2px;height:6px;background:#666"></div>
<div class="t" style="left:2387px;top:234.1px;font-size:20px;color:#cfcfcf">10</div>
<div style="left:2543px;top:230px;width:2px;height:30px;background:#666"></div>
<div style="left:2563px;top:254px;width:2px;height:6px;background:#666"></div>
<div style="left:2583px;top:252px;width:2px;height:8px;background:#666"></div>
<div style="left:2603px;top:254px;width:2px;height:6px;background:#666"></div>
<div style="left:2624px;top:248px;width:2px;height:12px;background:#666"></div>
<div style="left:2644px;top:254px;width:2px;height:6px;background:#666"></div>
<div style="left:2664px;top:252px;width:2px;height:8px;background:#666"></div>
<div style="left:2684px;top:254px;width:2px;height:6px;background:#666"></div>
<div class="t" style="left:2549px;top:234.1px;font-size:20px;color:#cfcfcf">11</div>
<div style="left:2704px;top:230px;width:2px;height:30px;background:#666"></div>
<div style="left:2725px;top:254px;width:2px;height:6px;background:#666"></div>
<div style="left:2745px;top:252px;width:2px;height:8px;background:#666"></div>
<div style="left:2765px;top:254px;width:2px;height:6px;background:#666"></div>
<div style="left:2785px;top:248px;width:2px;height:12px;background:#666"></div>
<div style="left:2806px;top:254px;width:2px;height:6px;background:#666"></div>
<div style="left:2826px;top:252px;width:2px;height:8px;background:#666"></div>
<div style="left:2846px;top:254px;width:2px;height:6px;background:#666"></div>
<div class="t" style="left:2710px;top:234.1px;font-size:20px;color:#cfcfcf">12</div>
<div style="left:2866px;top:230px;width:2px;height:30px;background:#666"></div>
<div style="left:2887px;top:254px;width:2px;height:6px;background:#666"></div>
<div style="left:2907px;top:252px;width:2px;height:8px;background:#666"></div>
<div style="left:2927px;top:254px;width:2px;height:6px;background:#666"></div>
<div style="left:2947px;top:248px;width:2px;height:12px;background:#666"></div>
<div style="left:2968px;top:254px;width:2px;height:6px;background:#666"></div>
<div style="left:2988px;top:252px;width:2px;height:8px;background:#666"></div>
<div style="left:3008px;top:254px;width:2px;height:6px;background:#666"></div>
<div class="t" style="left:2872px;top:234.1px;font-size:20px;color:#cfcfcf">13</div>
<div style="left:3028px;top:230px;width:2px;height:30px;background:#666"></div>
<div style="left:3049px;top:254px;width:2px;height:6px;background:#666"></div>
<div style="left:3069px;top:252px;width:2px;height:8px;background:#666"></div>
<div style="left:3089px;top:254px;width:2px;height:6px;background:#666"></div>
<div style="left:3109px;top:248px;width:2px;height:12px;background:#666"></div>
<div style="left:3130px;top:254px;width:2px;height:6px;background:#666"></div>
<div style="left:3150px;top:252px;width:2px;height:8px;background:#666"></div>
<div style="left:3170px;top:254px;width:2px;height:6px;background:#666"></div>
<div class="t" style="left:3034px;top:234.1px;font-size:20px;color:#cfcfcf">14</div>
<div style="left:3190px;top:230px;width:2px;height:30px;background:#666"></div>
<div style="left:3211px;top:254px;width:2px;height:6px;background:#666"></div>
<div style="left:3231px;top:252px;width:2px;height:8px;background:#666"></div>
<div style="left:3251px;top:254px;width:2px;height:6px;background:#666"></div>
<div style="left:3271px;top:248px;width:2px;height:12px;background:#666"></div>
<div class="t" style="left:3196px;top:234.1px;font-size:20px;color:#cfcfcf">15</div>
<div style="left:96px;top:277px;width:12px;height:2px;background:#666"></div>
<div style="left:102px;top:297px;width:6px;height:2px;background:#666"></div>
<div style="left:100px;top:318px;width:8px;height:2px;background:#666"></div>
<div style="left:102px;top:338px;width:6px;height:2px;background:#666"></div>
<div style="left:78px;top:358px;width:31px;height:2px;background:#666"></div>
<div style="left:102px;top:378px;width:6px;height:2px;background:#666"></div>
<div style="left:100px;top:398px;width:8px;height:2px;background:#666"></div>
<div style="left:102px;top:419px;width:6px;height:2px;background:#666"></div>
<div style="left:96px;top:439px;width:12px;height:2px;background:#666"></div>
<div style="left:102px;top:459px;width:6px;height:2px;background:#666"></div>
<div style="left:100px;top:480px;width:8px;height:2px;background:#666"></div>
<div style="left:102px;top:500px;width:6px;height:2px;background:#666"></div>
<div class="t" style="left:82px;top:332.1px;font-size:20px;color:#cfcfcf">0</div>
<div style="left:78px;top:520px;width:31px;height:2px;background:#666"></div>
<div style="left:102px;top:540px;width:6px;height:2px;background:#666"></div>
<div style="left:100px;top:560px;width:8px;height:2px;background:#666"></div>
<div style="left:102px;top:581px;width:6px;height:2px;background:#666"></div>
<div style="left:96px;top:601px;width:12px;height:2px;background:#666"></div>
<div style="left:102px;top:621px;width:6px;height:2px;background:#666"></div>
<div style="left:100px;top:642px;width:8px;height:2px;background:#666"></div>
<div style="left:102px;top:662px;width:6px;height:2px;background:#666"></div>
<div class="t" style="left:82px;top:494.1px;font-size:20px;color:#cfcfcf">1</div>
<div style="left:78px;top:682px;width:31px;height:2px;background:#666"></div>
<div style="left:102px;top:702px;width:6px;height:2px;background:#666"></div>
<div style="left:100px;top:722px;width:8px;height:2px;background:#666"></div>
<div style="left:102px;top:743px;width:6px;height:2px;background:#666"></div>
<div style="left:96px;top:763px;width:12px;height:2px;background:#666"></div>
<div style="left:102px;top:783px;width:6px;height:2px;background:#666"></div>
<div style="left:100px;top:804px;width:8px;height:2px;background:#666"></div>
<div style="left:102px;top:824px;width:6px;height:2px;background:#666"></div>
<div class="t" style="left:82px;top:656.1px;font-size:20px;color:#cfcfcf">2</div>
<div style="left:78px;top:844px;width:31px;height:2px;background:#666"></div>
<div style="left:102px;top:864px;width:6px;height:2px;background:#666"></div>
<div style="left:100px;top:884px;width:8px;height:2px;background:#666"></div>
<div style="left:102px;top:905px;width:6px;height:2px;background:#666"></div>
<div style="left:96px;top:925px;width:12px;height:2px;background:#666"></div>
<div style="left:102px;top:945px;width:6px;height:2px;background:#666"></div>
<div style="left:100px;top:966px;width:8px;height:2px;background:#666"></div>
<div style="left:102px;top:986px;width:6px;height:2px;background:#666"></div>
<div class="t" style="left:82px;top:818.1px;font-size:20px;color:#cfcfcf">3</div>
<div style="left:78px;top:1006px;width:31px;height:2px;background:#666"></div>
<div style="left:102px;top:1026px;width:6px;height:2px;background:#666"></div>
<div style="left:100px;top:1046px;width:8px;height:2px;background:#666"></div>
<div style="left:102px;top:1067px;width:6px;height:2px;background:#666"></div>
<div style="left:96px;top:1087px;width:12px;height:2px;background:#666"></div>
<div style="left:102px;top:1107px;width:6px;height:2px;background:#666"></div>
<div style="left:100px;top:1128px;width:8px;height:2px;background:#666"></div>
<div style="left:102px;top:1148px;width:6px;height:2px;background:#666"></div>
<div class="t" style="left:82px;top:980.1px;font-size:20px;color:#cfcfcf">4</div>
<div style="left:78px;top:1168px;width:31px;height:2px;background:#666"></div>
<div style="left:102px;top:1188px;width:6px;height:2px;background:#666"></div>
<div style="left:100px;top:1208px;width:8px;height:2px;background:#666"></div>
<div style="left:102px;top:1229px;width:6px;height:2px;background:#666"></div>
<div style="left:96px;top:1249px;width:12px;height:2px;background:#666"></div>
<div style="left:102px;top:1269px;width:6px;height:2px;background:#666"></div>
<div style="left:100px;top:1290px;width:8px;height:2px;background:#666"></div>
<div style="left:102px;top:1310px;width:6px;height:2px;background:#666"></div>
<div class="t" style="left:82px;top:1142.1px;font-size:20px;color:#cfcfcf">5</div>
<div style="left:78px;top:1330px;width:31px;height:2px;background:#666"></div>
<div style="left:102px;top:1350px;width:6px;height:2px;background:#666"></div>
<div style="left:100px;top:1370px;width:8px;height:2px;background:#666"></div>
<div style="left:102px;top:1391px;width:6px;height:2px;background:#666"></div>
<div style="left:96px;top:1411px;width:12px;height:2px;background:#666"></div>
<div style="left:102px;top:1431px;width:6px;height:2px;background:#666"></div>
<div style="left:100px;top:1452px;width:8px;height:2px;background:#666"></div>
<div style="left:102px;top:1472px;width:6px;height:2px;background:#666"></div>
<div class="t" style="left:82px;top:1304.1px;font-size:20px;color:#cfcfcf">6</div>
<div style="left:78px;top:1492px;width:31px;height:2px;background:#666"></div>
<div style="left:102px;top:1512px;width:6px;height:2px;background:#666"></div>
<div style="left:100px;top:1532px;width:8px;height:2px;background:#666"></div>
<div style="left:102px;top:1553px;width:6px;height:2px;background:#666"></div>
<div style="left:96px;top:1573px;width:12px;height:2px;background:#666"></div>
<div style="left:102px;top:1593px;width:6px;height:2px;background:#666"></div>
<div style="left:100px;top:1614px;width:8px;height:2px;background:#666"></div>
<div style="left:102px;top:1634px;width:6px;height:2px;background:#666"></div>
<div class="t" style="left:82px;top:1466.1px;font-size:20px;color:#cfcfcf">7</div>
<div style="left:78px;top:1654px;width:31px;height:2px;background:#666"></div>
<div style="left:102px;top:1674px;width:6px;height:2px;background:#666"></div>
<div style="left:100px;top:1694px;width:8px;height:2px;background:#666"></div>
<div style="left:102px;top:1715px;width:6px;height:2px;background:#666"></div>
<div style="left:96px;top:1735px;width:12px;height:2px;background:#666"></div>
<div style="left:102px;top:1755px;width:6px;height:2px;background:#666"></div>
<div style="left:100px;top:1776px;width:8px;height:2px;background:#666"></div>
<div style="left:102px;top:1796px;width:6px;height:2px;background:#666"></div>
<div class="t" style="left:82px;top:1628.1px;font-size:20px;color:#cfcfcf">8</div>
<div style="left:78px;top:1816px;width:31px;height:2px;background:#666"></div>
<div style="left:102px;top:1836px;width:6px;height:2px;background:#666"></div>
<div style="left:100px;top:1856px;width:8px;height:2px;background:#666"></div>
<div style="left:102px;top:1877px;width:6px;height:2px;background:#666"></div>
<div style="left:96px;top:1897px;width:12px;height:2px;background:#666"></div>
<div style="left:102px;top:1917px;width:6px;height:2px;background:#666"></div>
<div style="left:100px;top:1938px;width:8px;height:2px;background:#666"></div>
<div style="left:102px;top:1958px;width:6px;height:2px;background:#666"></div>
<div class="t" style="left:82px;top:1790.1px;font-size:20px;color:#cfcfcf">9</div>
<div style="left:78px;top:1978px;width:31px;height:2px;background:#666"></div>
<div style="left:102px;top:1998px;width:6px;height:2px;background:#666"></div>
<div style="left:100px;top:2018px;width:8px;height:2px;background:#666"></div>
<div style="left:102px;top:2039px;width:6px;height:2px;background:#666"></div>
<div style="left:96px;top:2059px;width:12px;height:2px;background:#666"></div>
<div style="left:102px;top:2079px;width:6px;height:2px;background:#666"></div>
<div style="left:100px;top:2100px;width:8px;height:2px;background:#666"></div>
<div style="left:102px;top:2120px;width:6px;height:2px;background:#666"></div>
<div class="t" style="left:82px;top:1936.3px;font-size:20px;color:#cfcfcf;line-height:17px">1<br>0</div><div style="left:107px;top:231px;width:2px;height:29px;background:#626262;"></div><div style="left:80px;top:238px;width:26px;height:2px;background:repeating-linear-gradient(90deg,#777 0 2px,transparent 2px 4px);"></div><div style="left:86px;top:233px;width:2px;height:26px;background:repeating-linear-gradient(#777 0 2px,transparent 2px 4px);"></div><div style="left:2074px;top:232px;width:2px;height:27px;background:repeating-linear-gradient(#8a8a8a 0 2px,transparent 2px 4px);"></div><div style="left:79px;top:461px;width:28px;height:2px;background:repeating-linear-gradient(90deg,#8a8a8a 0 2px,transparent 2px 4px);"></div><div style="left:762px;top:360px;width:2090px;height:1623px;background:rgba(0,0,0,0.22);filter:blur(1.2px);"></div><div style="left:761px;top:359px;width:2089px;height:1622px;background:#000;"></div><div style="left:763px;top:361px;width:2085px;height:1618px;background:#fefefe;"></div><div style="left:1032px;top:591px;width:489px;height:1025px;background:#f5da52;"></div><div style="left:1521px;top:591px;width:289px;height:1025px;background:#e79841;"></div><div style="left:1810px;top:591px;width:290px;height:1025px;background:#2e2f8c;"></div><div style="left:2100px;top:591px;width:488px;height:1025px;background:#3d74b6;"></div><div style="left:1254px;top:975px;width:267px;height:257px;background:#88ab9a;"></div><div style="left:2100px;top:975px;width:263px;height:257px;background:#88ab9a;"></div><div style="left:1032px;top:1766px;width:1556px;height:109px;background:linear-gradient(90deg,#e9b45a 0%,#a9ae7a 33%,#89ab95 48%,#6faab2 65%,#58aad5 82%,#4eaae8 100%);"></div><div style="left:3277px;top:229px;width:31px;height:1899px;background:#494949;"></div><svg style="position:absolute;left:3283px;top:244px;" width="20" height="14" viewBox="0 0 20 14"><path d="M2 11l8-8 8 8" fill="none" stroke="#cfcfcf" stroke-width="2"/></svg><div style="left:3279px;top:1157px;width:28px;height:47px;background:#616161;border-radius:14px;"></div><svg style="position:absolute;left:3285px;top:2106px;" width="18" height="12" viewBox="0 0 18 12"><path d="M2 2l7 7 7-7" fill="none" stroke="#aaa" stroke-width="1.8"/></svg><div style="left:78px;top:2128px;width:3230px;height:32px;background:#4b4b4b;"></div><div style="left:78px;top:2127px;width:3199px;height:1px;background:#3c3c3c;"></div><div style="left:213px;top:2130px;width:10px;height:30px;background:#505050;"></div><div style="left:86px;top:2130px;width:94px;height:30px;background:#434343;border-radius:5px 0 0 0;"></div><div style="left:181px;top:2130px;width:32px;height:30px;background:#494949;border-radius:0 5px 0 0;"></div><div class="t" style="left:94.0px;top:2140.1px;font-size:17.60px;-webkit-text-stroke:0.35px #ececec;color:#ececec;">100%</div><svg style="position:absolute;left:189px;top:2145px;" width="15" height="10" viewBox="0 0 15 10"><path d="M1 2l6.5 6.5l6.5 -6.5" fill="none" stroke="#e8e8e8" stroke-width="2.2"/></svg><div style="left:223px;top:2130px;width:94px;height:30px;background:#434343;border-radius:5px 0 0 0;"></div><div style="left:318px;top:2130px;width:32px;height:30px;background:#494949;border-radius:0 5px 0 0;"></div><div class="t" style="left:231.0px;top:2137.2px;font-size:21.00px;-webkit-text-stroke:0.35px #ececec;color:#ececec;">0°</div><svg style="position:absolute;left:326px;top:2145px;" width="15" height="10" viewBox="0 0 15 10"><path d="M1 2l6.5 6.5l6.5 -6.5" fill="none" stroke="#e8e8e8" stroke-width="2.2"/></svg><div style="left:352px;top:2130px;width:77px;height:30px;background:#515151;"></div><div style="left:429px;top:2130px;width:75px;height:30px;background:#434343;border-radius:5px 0 0 0;"></div><div style="left:505px;top:2130px;width:33px;height:30px;background:#494949;border-radius:0 5px 0 0;"></div><div class="t" style="left:437.0px;top:2137.2px;font-size:21.00px;-webkit-text-stroke:0.35px #ececec;color:#ececec;">1</div><svg style="position:absolute;left:513px;top:2145px;" width="15" height="10" viewBox="0 0 15 10"><path d="M1 2l6.5 6.5l6.5 -6.5" fill="none" stroke="#e8e8e8" stroke-width="2.2"/></svg><div style="left:538px;top:2130px;width:78px;height:30px;background:#525252;"></div><svg style="position:absolute;left:365px;top:2136px;" width="48" height="20" viewBox="0 0 48 20"><path d="M2 2v16" stroke="#777" stroke-width="3"/><path d="M18 2L6 10l12 8zM44 2L32 10l12 8z" fill="#777"/></svg><svg style="position:absolute;left:553px;top:2136px;" width="50" height="20" viewBox="0 0 50 20"><path d="M3 2l12 8-12 8zM29 2l12 8-12 8z" fill="#777"/><path d="M46 2v16" stroke="#777" stroke-width="3"/></svg><div style="left:617px;top:2130px;width:408px;height:30px;background:#4f4f4f;"></div><div class="t" style="left:762.0px;top:2137.9px;font-size:20.18px;-webkit-text-stroke:0.35px #d8d8d8;color:#d8d8d8;">Selection</div><svg style="position:absolute;left:1003px;top:2136px;" width="14" height="20" viewBox="0 0 14 20"><path d="M2 2l10 8-10 8z" fill="#e0e0e0"/></svg><svg style="position:absolute;left:1036px;top:2135px;" width="14" height="20" viewBox="0 0 14 20"><path d="M11 2L3 10l8 8" fill="none" stroke="#aaa" stroke-width="1.8"/></svg><div style="left:2106px;top:2133px;width:47px;height:25px;background:#5d5d5d;border-radius:12px;"></div><svg style="position:absolute;left:3256px;top:2136px;" width="12" height="18" viewBox="0 0 12 18"><path d="M3 2l7 7-7 7" fill="none" stroke="#aaa" stroke-width="1.8"/></svg><div style="left:3277px;top:2128px;width:31px;height:32px;background:#4f4f4f;"></div><div style="left:3307px;top:176px;width:6px;height:1984px;background:#4a4a4a;"></div><div style="left:3307px;top:176px;width:2px;height:1984px;background:#363636;"></div><div style="left:3311px;top:176px;width:2px;height:1984px;background:#363636;"></div><div style="left:3313px;top:176px;width:70px;height:1984px;background:#505050;"></div><div style="left:3313px;top:176px;width:70px;height:21px;background:#424242;"></div><div class="t" style="left:3356.0px;top:174.4px;font-size:22.00px;-webkit-text-stroke:0.35px #cfcfcf;color:#cfcfcf;">&#8249;&#8249;</div><div style="left:3313px;top:197px;width:70px;height:182px;background:#535353;"></div><div style="left:3330px;top:203px;width:36px;height:8px;background:repeating-linear-gradient(90deg,#2a2a2a 0 2px,transparent 2px 3px);"></div><div style="left:3313px;top:381px;width:70px;height:128px;background:#535353;"></div><div style="left:3330px;top:387px;width:36px;height:8px;background:repeating-linear-gradient(90deg,#2a2a2a 0 2px,transparent 2px 3px);"></div><div style="left:3313px;top:511px;width:70px;height:126px;background:#535353;"></div><div style="left:3330px;top:517px;width:36px;height:8px;background:repeating-linear-gradient(90deg,#2a2a2a 0 2px,transparent 2px 3px);"></div><div style="left:3313px;top:639px;width:70px;height:76px;background:#535353;"></div><div style="left:3330px;top:645px;width:36px;height:8px;background:repeating-linear-gradient(90deg,#2a2a2a 0 2px,transparent 2px 3px);"></div><div style="left:3313px;top:379px;width:70px;height:2px;background:#3c3c3c;"></div><div style="left:3313px;top:509px;width:70px;height:2px;background:#3c3c3c;"></div><div style="left:3313px;top:637px;width:70px;height:2px;background:#3c3c3c;"></div><div style="left:3313px;top:715px;width:70px;height:2px;background:#3c3c3c;"></div><svg style="position:absolute;left:3333px;top:225px;" width="34" height="36" viewBox="0 0 34 36"><path d="M2 31L12 4h4l10 27h-5l-2.5-7h-9L7 31zM11 20h6l-3-9z" fill="#cdcdcd"/><rect x="29" y="1" width="2" height="33" fill="#cdcdcd"/></svg><svg style="position:absolute;left:3336px;top:278px;" width="26" height="36" viewBox="0 0 26 36"><path d="M12 2h12v3h-2v29h-3V5h-3v29h-3V17c-6 0-10-3-10-7.5S7 2 12 2z" fill="#cdcdcd"/></svg><div class="t" style="left:3333px;top:327.447px;font-size:42px;font-family:'Liberation Serif',serif;font-style:italic;-webkit-text-stroke:1.2px #c4c4c4;color:#c4c4c4">O</div><svg style="position:absolute;left:3332px;top:407px;" width="40" height="36" viewBox="0 0 40 36"><path d="M18 28L27 3h4l9 25h-4.5l-2-6h-8.5l-2 6zM25 18h6l-3-9z" fill="#cdcdcd"/><rect x="2" y="18" width="10" height="10" fill="none" stroke="#cdcdcd" stroke-width="2"/><rect x="7" y="23" width="10" height="10" fill="none" stroke="#cdcdcd" stroke-width="2"/></svg><svg style="position:absolute;left:3332px;top:460px;" width="40" height="36" viewBox="0 0 40 36"><path d="M28 2h10v3h-2v25h-3V5h-2v25h-3V15c-5 0-8-2.5-8-6.5S23 2 28 2z" fill="#cdcdcd"/><rect x="2" y="17" width="10" height="10" fill="none" stroke="#cdcdcd" stroke-width="2"/><rect x="7" y="22" width="10" height="10" fill="none" stroke="#cdcdcd" stroke-width="2"/></svg><svg style="position:absolute;left:3331px;top:535px;" width="38" height="38" viewBox="0 0 38 38"><circle cx="19" cy="19" r="11.5" fill="#cdcdcd"/><circle cx="19" cy="19" r="16" fill="none" stroke="#cdcdcd" stroke-width="2" stroke-dasharray="4 3"/></svg><svg style="position:absolute;left:3330px;top:590px;" width="40" height="36" viewBox="0 0 40 36"><circle cx="14" cy="14" r="11" fill="#cdcdcd"/><circle cx="23" cy="22" r="11" fill="#8a8a8a" stroke="#cdcdcd" stroke-width="2.5"/></svg><svg style="position:absolute;left:3330px;top:664px;" width="38" height="37" viewBox="0 0 38 37"><rect x="2" y="1.5" width="21" height="23" fill="none" stroke="#cdcdcd" stroke-width="2.5"/><rect x="11" y="14" width="24" height="21" fill="#535353" stroke="#cdcdcd" stroke-width="2.5"/></svg><div style="left:3382px;top:176px;width:6px;height:1984px;background:#4a4a4a;"></div><div style="left:3382px;top:176px;width:2px;height:1984px;background:#363636;"></div><div style="left:3386px;top:176px;width:2px;height:1984px;background:#363636;"></div><div style="left:3388px;top:176px;width:452px;height:21px;background:#424242;"></div><div class="t" style="left:3810.0px;top:174.4px;font-size:22.00px;-webkit-text-stroke:0.35px #cfcfcf;color:#cfcfcf;">&#8250;&#8250;</div><div style="left:3388px;top:197px;width:452px;height:620px;background:#535353;"></div><div style="left:3388px;top:197px;width:452px;height:52px;background:#424242;"></div><div style="left:3388px;top:198px;width:122px;height:51px;background:#535353;"></div><div style="left:3511px;top:198px;width:84px;height:51px;background:#484848;"></div><div style="left:3596px;top:198px;width:147px;height:51px;background:#484848;"></div><div style="left:3510px;top:198px;width:1px;height:51px;background:#3a3a3a;"></div><div style="left:3595px;top:198px;width:1px;height:51px;background:#3a3a3a;"></div><div style="left:3743px;top:198px;width:1px;height:51px;background:#3a3a3a;"></div><div class="t" style="left:3405.0px;top:212.9px;font-size:19.08px;font-weight:bold;color:#f2f2f2;">Swatches</div><div class="t" style="left:3527.0px;top:212.1px;font-size:19.92px;font-weight:bold;color:#c3c3c3;">Color</div><div class="t" style="left:3613.0px;top:212.3px;font-size:19.75px;font-weight:bold;color:#c3c3c3;">Color Guide</div><svg style="position:absolute;left:3806px;top:215px;" width="22" height="16" viewBox="0 0 22 16"><path d="M1 2h20M1 8h20M1 14h20" stroke="#cfcfcf" stroke-width="2"/></svg><svg style="position:absolute;left:3398px;top:261px;" width="56" height="57" viewBox="0 0 56 57"><rect x="19.4" y="19.4" width="35.8" height="35.3" fill="#fff" stroke="#2a2a2a" stroke-width="1.3"/><rect x="31.3" y="31.5" width="12.5" height="12.5" fill="#555" stroke="#1e1e1e" stroke-width="2.6"/><path d="M20.5 54L54.5 20" stroke="#de3a2e" stroke-width="3"/><rect x="0.6" y="0.6" width="35.3" height="35.4" fill="#fff" stroke="#2a2a2a" stroke-width="1.2"/><rect x="3.6" y="3.6" width="29.4" height="29.6" fill="#2e2d93"/></svg><div style="left:3738px;top:262px;width:90px;height:42px;background:#4a4a4a;border:1px solid #5a5a5a;border-radius:5px;box-sizing:border-box;"></div><div style="left:3784px;top:262px;width:44px;height:42px;background:#2c2c2c;border-radius:0 5px 5px 0;"></div><svg style="position:absolute;left:3747px;top:270px;" width="26" height="26" viewBox="0 0 26 26"><path d="M3 4h20M3 10h20M3 16h20M3 22h20" stroke="#cfcfcf" stroke-width="3"/></svg><svg style="position:absolute;left:3793px;top:270px;" width="26" height="26" viewBox="0 0 26 26"><g fill="#fff"><rect x="0" y="0" width="7" height="7"/><rect x="9" y="0" width="7" height="7"/><rect x="18" y="0" width="7" height="7"/><rect x="0" y="9" width="7" height="7"/><rect x="9" y="9" width="7" height="7"/><rect x="18" y="9" width="7" height="7"/><rect x="0" y="18" width="7" height="7"/><rect x="9" y="18" width="7" height="7"/><rect x="18" y="18" width="7" height="7"/></g></svg><div style="left:3399px;top:322px;width:429px;height:460px;background:transparent;border:1px solid #5c5c5c;box-sizing:border-box;"></div><svg style="position:absolute;left:3399px;top:328px" width="25" height="25"><rect width="25" height="25" fill="#fff"/><path d="M3 22L22 3" stroke="#d93a2e" stroke-width="2.5"/></svg>
<svg style="position:absolute;left:3425px;top:328px" width="25" height="25"><rect width="25" height="25" fill="#eee"/><circle cx="12.5" cy="12.5" r="7" fill="none" stroke="#333" stroke-width="1"/><path d="M12.5 1v23M1 12.5h23" stroke="#333" stroke-width="1"/></svg>
<div style="left:3451px;top:328px;width:25px;height:25px;background:#ffffff"></div>
<div style="left:3478px;top:328px;width:25px;height:25px;background:#1d1d1b"></div>
<div style="left:3504px;top:328px;width:25px;height:25px;background:#e2261d"></div>
<div style="left:3530px;top:328px;width:25px;height:25px;background:#f9ec42"></div>
<div style="left:3556px;top:328px;width:25px;height:25px;background:#3fa457"></div>
<div style="left:3582px;top:328px;width:25px;height:25px;background:#3aa4e0"></div>
<div style="left:3608px;top:328px;width:25px;height:25px;background:#fff"></div><div style="left:3611px;top:331px;width:19px;height:19px;background:#2e2d93;box-shadow:0 0 0 1.5px #111"></div>
<div style="left:3635px;top:328px;width:25px;height:25px;background:#e0248a"></div>
<div style="left:3661px;top:328px;width:25px;height:25px;background:#b7262f"></div>
<div style="left:3687px;top:328px;width:25px;height:25px;background:#e64a32"></div>
<div style="left:3713px;top:328px;width:25px;height:25px;background:#e8702a"></div>
<div style="left:3739px;top:328px;width:25px;height:25px;background:#f09a34"></div>
<div style="left:3765px;top:328px;width:25px;height:25px;background:#f5b04c"></div>
<div style="left:3399px;top:354px;width:25px;height:25px;background:#f7e94a"></div>
<div style="left:3425px;top:354px;width:25px;height:25px;background:#d6df3f"></div>
<div style="left:3451px;top:354px;width:25px;height:25px;background:#9ccc52"></div>
<div style="left:3478px;top:354px;width:25px;height:25px;background:#53b15a"></div>
<div style="left:3504px;top:354px;width:25px;height:25px;background:#3b9b50"></div>
<div style="left:3530px;top:354px;width:25px;height:25px;background:#24673b"></div>
<div style="left:3556px;top:354px;width:25px;height:25px;background:#52b37e"></div>
<div style="left:3582px;top:354px;width:25px;height:25px;background:#3fa3a0"></div>
<div style="left:3608px;top:354px;width:25px;height:25px;background:#44a6dc"></div>
<div style="left:3635px;top:354px;width:25px;height:25px;background:#3a78c0"></div>
<div style="left:3661px;top:354px;width:25px;height:25px;background:#2f3f95"></div>
<div style="left:3687px;top:354px;width:25px;height:25px;background:#282565"></div>
<div style="left:3713px;top:354px;width:25px;height:25px;background:#6a3594"></div>
<div style="left:3739px;top:354px;width:25px;height:25px;background:#8c3393"></div>
<div style="left:3765px;top:354px;width:25px;height:25px;background:#a82d70"></div>
<div style="left:3399px;top:380px;width:25px;height:25px;background:#cf2c5a"></div>
<div style="left:3425px;top:380px;width:25px;height:25px;background:#e2438a"></div>
<div style="left:3451px;top:380px;width:25px;height:25px;background:#c6b59c"></div>
<div style="left:3478px;top:380px;width:25px;height:25px;background:#9e8b7b"></div>
<div style="left:3504px;top:380px;width:25px;height:25px;background:#72655a"></div>
<div style="left:3530px;top:380px;width:25px;height:25px;background:#574740"></div>
<div style="left:3556px;top:380px;width:25px;height:25px;background:#c69c6e"></div>
<div style="left:3582px;top:380px;width:25px;height:25px;background:#a97c50"></div>
<div style="left:3608px;top:380px;width:25px;height:25px;background:#8b5e3c"></div>
<div style="left:3635px;top:380px;width:25px;height:25px;background:#754c29"></div>
<div style="left:3661px;top:380px;width:25px;height:25px;background:#603913"></div>
<div style="left:3687px;top:380px;width:25px;height:25px;background:#3c2415"></div>
<div style="left:3713px;top:380px;width:25px;height:25px;background:linear-gradient(90deg,#fff,#1d1d1b)"></div>
<div style="left:3739px;top:380px;width:25px;height:25px;background:linear-gradient(90deg,#fbe042,#e8692a)"></div>
<div style="left:3765px;top:380px;width:25px;height:25px;background:linear-gradient(90deg,#3a8de0,#c9dff5)"></div>
<svg style="position:absolute;left:3399px;top:406px" width="25" height="25"><rect width="25" height="25" fill="#111"/><circle cx="12.5" cy="12.5" r="9" fill="#f4f4f4"/><g fill="#bbb"><rect x="10" y="7.5" width="3.5" height="3.5"/><rect x="6.5" y="11" width="3.5" height="3.5"/><rect x="13.5" y="11" width="3.5" height="3.5"/><rect x="10" y="14.5" width="3.5" height="3.5"/></g></svg>
<svg style="position:absolute;left:3425px;top:406px" width="25" height="25"><rect width="25" height="25" fill="#7db85a"/><ellipse cx="12.5" cy="2" rx="8" ry="4" fill="#f2f8e8"/><ellipse cx="12.5" cy="23" rx="8" ry="4" fill="#f2f8e8"/><path d="M5 5v15M20 5v15" stroke="#d8e8a8" stroke-width="2"/><circle cx="12.5" cy="12.5" r="4" fill="#6aa845"/></svg>
<svg style="position:absolute;left:3451px;top:406px" width="25" height="25"><rect width="25" height="25" fill="#8a6a50"/><g fill="none" stroke="#efe2d6" stroke-width="2"><path d="M4 3c4 0 6 3 4 6s-5 4-4 8"/><circle cx="14" cy="12" r="3.5"/><path d="M17 21c3 1 6-1 5-4"/><path d="M14 2c2 2 6 1 8 4"/><path d="M2 20c2 2 5 3 8 2"/></g></svg>
<svg style="position:absolute;left:3400px;top:438px" width="25" height="23"><path d="M1 3h8l2 3h13v14H1z" fill="#cfcfcf"/></svg>
<div style="left:3425px;top:437px;width:25px;height:25px;background:#1d1d1b"></div>
<div style="left:3451px;top:437px;width:25px;height:25px;background:#3c3c3b"></div>
<div style="left:3478px;top:437px;width:25px;height:25px;background:#575756"></div>
<div style="left:3504px;top:437px;width:25px;height:25px;background:#6f6f6e"></div>
<div style="left:3530px;top:437px;width:25px;height:25px;background:#878787"></div>
<div style="left:3556px;top:437px;width:25px;height:25px;background:#9d9d9c"></div>
<div style="left:3582px;top:437px;width:25px;height:25px;background:#b2b2b2"></div>
<div style="left:3608px;top:437px;width:25px;height:25px;background:#c6c6c6"></div>
<div style="left:3635px;top:437px;width:25px;height:25px;background:#dadada"></div>
<div style="left:3661px;top:437px;width:25px;height:25px;background:#ededed"></div>
<div style="left:3687px;top:437px;width:25px;height:25px;background:#f6f6f6"></div>
<svg style="position:absolute;left:3400px;top:468px" width="25" height="23"><path d="M1 3h8l2 3h13v14H1z" fill="#cfcfcf"/></svg>
<div style="left:3425px;top:467px;width:25px;height:25px;background:#e2261d"></div>
<div style="left:3451px;top:467px;width:25px;height:25px;background:#e8702a"></div>
<div style="left:3478px;top:467px;width:25px;height:25px;background:#f8d840"></div>
<div style="left:3504px;top:467px;width:25px;height:25px;background:#3fa457"></div>
<div style="left:3530px;top:467px;width:25px;height:25px;background:#2c3f95"></div>
<div style="left:3556px;top:467px;width:25px;height:25px;background:#7d3f98"></div><svg style="position:absolute;left:3407px;top:788px;" width="34" height="24" viewBox="0 0 34 24"><rect x="1" y="2" width="4.5" height="18" fill="#cdcdcd"/><rect x="7" y="1" width="5.5" height="19" fill="#cdcdcd"/><rect x="8.8" y="3" width="2" height="5" fill="#535353"/><path d="M13.5 3l2.5-1 6 18-2.5 1z" fill="#cdcdcd"/><path d="M23 17h6l-3 3.5z" fill="#cdcdcd"/></svg><svg style="position:absolute;left:3456px;top:786px;" width="28" height="26" viewBox="0 0 28 26"><path d="M3 9V2h18" fill="none" stroke="#cdcdcd" stroke-width="2"/><path d="M6 12V5h18v18H14" fill="none" stroke="#cdcdcd" stroke-width="2"/><path d="M17 5h5v8l-2.5-2-2.5 2z" fill="#cdcdcd"/><path d="M1 18h8" stroke="#cdcdcd" stroke-width="2.2"/><path d="M8 13l6 5-6 5z" fill="#cdcdcd"/></svg><svg style="position:absolute;left:3567px;top:789px;" width="34" height="22" viewBox="0 0 34 22"><rect x="1" y="0" width="20" height="20" fill="#cdcdcd"/><g fill="#535353"><rect x="3" y="2" width="4.5" height="4.5"/><rect x="14.5" y="2" width="4.5" height="4.5"/><rect x="8.8" y="8" width="4.5" height="4.5"/><rect x="8.8" y="13.5" width="4.5" height="4.5"/><rect x="14.5" y="13.5" width="4.5" height="4.5"/></g><g fill="#8a8a8a"><rect x="8.8" y="2" width="4.5" height="4.5"/><rect x="3" y="8" width="4.5" height="4.5"/></g><path d="M25 17h7l-3.5 4z" fill="#cdcdcd"/></svg><svg style="position:absolute;left:3618px;top:788px;" width="23" height="23" viewBox="0 0 23 23"><rect x="1" y="1" width="21" height="21" fill="none" stroke="#cdcdcd" stroke-width="2"/><rect x="1" y="1" width="21" height="4" fill="#cdcdcd"/><g fill="#cdcdcd"><rect x="4.5" y="8.5" width="2.5" height="2.5"/><rect x="4.5" y="12.5" width="2.5" height="2.5"/><rect x="4.5" y="16.5" width="2.5" height="2.5"/><rect x="8.5" y="8.5" width="10" height="2"/><rect x="8.5" y="12.5" width="10" height="2"/><rect x="8.5" y="16.5" width="10" height="2"/></g></svg><svg style="position:absolute;left:3665px;top:789px;" width="26" height="21" viewBox="0 0 26 21"><path d="M0.5 1.5h8l3 3h14v15.5H0.5z" fill="#cdcdcd"/><path d="M2.5 3h5.5l1.5 1.5H2.5z" fill="#535353"/></svg><svg style="position:absolute;left:3717px;top:788px;" width="23" height="23" viewBox="0 0 23 23"><rect x="1" y="1" width="21" height="21" fill="none" stroke="#cdcdcd" stroke-width="2"/><path d="M11.5 6v11M6 11.5h11" stroke="#cdcdcd" stroke-width="2.2"/></svg><svg style="position:absolute;left:3764px;top:786px;" width="23" height="26" viewBox="0 0 23 26"><path d="M1 6h21M8 6V2.5h7V6M3.5 6l1.5 18h13l1.5-18M8.5 9.5v11M11.5 9.5v11M14.5 9.5v11" fill="none" stroke="#cdcdcd" stroke-width="2"/></svg><div style="left:3388px;top:817px;width:452px;height:5px;background:#3a3a3a;"></div><div style="left:3388px;top:823px;width:452px;height:1337px;background:#535353;"></div><div style="left:3388px;top:823px;width:452px;height:50px;background:#424242;"></div><div style="left:3388px;top:824px;width:133px;height:49px;background:#484848;"></div><div style="left:3521px;top:824px;width:96px;height:49px;background:#535353;"></div><div style="left:3617px;top:824px;width:117px;height:49px;background:#484848;"></div><div style="left:3521px;top:824px;width:1px;height:49px;background:#3a3a3a;"></div><div style="left:3617px;top:824px;width:1px;height:49px;background:#3a3a3a;"></div><div style="left:3734px;top:824px;width:1px;height:49px;background:#3a3a3a;"></div><div class="t" style="left:3406.0px;top:837.4px;font-size:19.61px;font-weight:bold;color:#c3c3c3;">Properties</div><div class="t" style="left:3539.0px;top:838.0px;font-size:18.92px;font-weight:bold;color:#f2f2f2;">Layers</div><div class="t" style="left:3634.0px;top:837.2px;font-size:19.89px;font-weight:bold;color:#c3c3c3;">Libraries</div><svg style="position:absolute;left:3806px;top:840px;" width="22" height="16" viewBox="0 0 22 16"><path d="M1 2h20M1 8h20M1 14h20" stroke="#cfcfcf" stroke-width="2"/></svg><div style="left:3399px;top:880px;width:429px;height:1242px;background:transparent;border:1px solid #595959;border-top:none;box-sizing:border-box;"></div><div style="left:3399px;top:886px;width:429px;height:39px;background:#54637b;"></div><div style="left:3438px;top:886px;width:1px;height:39px;background:#4a5870;"></div><div style="left:3759px;top:886px;width:1px;height:39px;background:#4a5870;"></div><svg style="position:absolute;left:3403px;top:897px;" width="28" height="18" viewBox="0 0 28 18"><path d="M1 9c4-6 9-8 13-8s9 2 13 8c-4 6-9 8-13 8S5 15 1 9z" fill="#d8dde5"/><circle cx="14" cy="9" r="5" fill="#54637b"/><circle cx="14" cy="9" r="2.5" fill="#d8dde5"/></svg><div style="left:3480px;top:888px;width:6px;height:34px;background:#5b7ff0;"></div><svg style="position:absolute;left:3500px;top:896px;" width="12" height="20" viewBox="0 0 12 20"><path d="M2 2l8 8-8 8" fill="none" stroke="#e6e6e6" stroke-width="2.2"/></svg><div style="left:3535px;top:889px;width:33px;height:33px;background:#111;"></div><svg style="position:absolute;left:3537px;top:891px;" width="29" height="29" viewBox="0 0 29 29"><rect width="29" height="29" fill="#fff"/><rect x="2" y="3" width="9" height="18" fill="#f5da52"/><rect x="11" y="3" width="5" height="18" fill="#e79841"/><rect x="16" y="3" width="5" height="18" fill="#2e2f8c"/><rect x="21" y="3" width="7" height="18" fill="#3d74b6"/><rect x="5" y="10" width="5" height="5" fill="#88ab9a"/><rect x="21" y="10" width="4" height="5" fill="#88ab9a"/><rect x="2" y="23" width="26" height="3" fill="#9cae8e"/></svg><div class="t" style="left:3578.0px;top:897.8px;font-size:19.19px;-webkit-text-stroke:0.35px #eaeaea;color:#eaeaea;">Layer 1</div><svg style="position:absolute;left:3771px;top:897px;" width="18" height="18" viewBox="0 0 18 18"><circle cx="9" cy="9" r="7" fill="none" stroke="#e6e6e6" stroke-width="1.8"/></svg><svg style="position:absolute;left:3814px;top:886px;" width="14" height="14" viewBox="0 0 14 14"><path d="M0 0h14v14z" fill="#e6e6e6"/></svg><div class="t" style="left:3399.0px;top:2130.8px;font-size:19.19px;-webkit-text-stroke:0.35px #d6d6d6;color:#d6d6d6;">1 Layer</div><svg style="position:absolute;left:3520px;top:2127px;" width="26" height="26" viewBox="0 0 26 26"><path d="M12 6H2v18h18V14" fill="none" stroke="#cdcdcd" stroke-width="2.5"/><path d="M10 16L24 2M15 2h9v9" fill="none" stroke="#cdcdcd" stroke-width="2.5"/></svg><svg style="position:absolute;left:3569px;top:2128px;" width="26" height="26" viewBox="0 0 26 26"><circle cx="10" cy="10" r="7.5" fill="none" stroke="#6f6f6f" stroke-width="2.5"/><path d="M15.5 15.5l8 8" stroke="#6f6f6f" stroke-width="3"/></svg><svg style="position:absolute;left:3617px;top:2128px;" width="24" height="26" viewBox="0 0 24 26"><rect x="6" y="8" width="16" height="16" fill="none" stroke="#cdcdcd" stroke-width="2"/><rect x="2" y="2" width="15" height="15" fill="#8a8a8a" stroke="#cdcdcd" stroke-width="2.5"/><rect x="6" y="8" width="11" height="9" fill="#cdcdcd"/></svg><svg style="position:absolute;left:3662px;top:2125px;" width="32" height="28" viewBox="0 0 32 28"><path d="M3 2v10h7" fill="none" stroke="#cdcdcd" stroke-width="2.2"/><path d="M8 8l4 4-4 4z" fill="#cdcdcd"/><rect x="13" y="8" width="17" height="17" fill="none" stroke="#cdcdcd" stroke-width="2.5"/><path d="M21.5 12v9M17 16.5h9" stroke="#cdcdcd" stroke-width="2.5"/></svg><svg style="position:absolute;left:3717px;top:2127px;" width="24" height="26" viewBox="0 0 24 26"><rect x="1.5" y="2" width="20" height="21" fill="none" stroke="#cdcdcd" stroke-width="2.5"/><path d="M11.5 7v11M6 12.5h11" stroke="#cdcdcd" stroke-width="2.5"/></svg><svg style="position:absolute;left:3763px;top:2126px;" width="24" height="28" viewBox="0 0 24 28"><path d="M2 6h20M8 6V2h8v4M4 6l2 20h12l2-20M9 10v13M12 10v13M15 10v13" fill="none" stroke="#6f6f6f" stroke-width="2"/></svg><div style="left:3837px;top:47px;width:3px;height:2113px;background:#3a3a3a;"></div><div style="left:2835px;top:295px;width:480px;height:504px;background:rgba(0,0,0,0.16);border-radius:3px;filter:blur(4px);"></div><div style="left:2841px;top:297px;width:471px;height:496px;background:#535353;border-radius:5px 5px 0 0;"></div><div style="left:2841px;top:297px;width:471px;height:25px;background:#424242;border-radius:5px 5px 0 0;"></div><svg style="position:absolute;left:2850px;top:304px;" width="16" height="16" viewBox="0 0 16 16"><path d="M2 2l12 12M14 2L2 14" stroke="#d6d6d6" stroke-width="2"/></svg><div class="t" style="left:3283.0px;top:298.2px;font-size:21.00px;-webkit-text-stroke:0.35px #cfcfcf;color:#cfcfcf;">&#8249;&#8249;</div><div style="left:2841px;top:322px;width:471px;height:51px;background:#424242;"></div><div style="left:2841px;top:323px;width:96px;height:50px;background:#484848;"></div><div style="left:2937px;top:323px;width:127px;height:50px;background:#535353;"></div><div class="t" style="left:2859.0px;top:337.4px;font-size:19.60px;font-weight:bold;color:#c8c8c8;">Stroke</div><svg style="position:absolute;left:2945px;top:337px;" width="14" height="19" viewBox="0 0 14 19"><path d="M2 7l5-5.5 5 5.5M2 11l5 5.5 5-5.5" fill="none" stroke="#bdbdbd" stroke-width="1.4"/></svg><div class="t" style="left:2966.0px;top:337.1px;font-size:19.94px;font-weight:bold;color:#f2f2f2;">Gradient</div><svg style="position:absolute;left:3280px;top:340px;" width="22" height="16" viewBox="0 0 22 16"><path d="M1 2h20M1 8h20M1 14h20" stroke="#cfcfcf" stroke-width="2"/></svg><div style="left:2853px;top:385px;width:58px;height:58px;background:#2a2a2a;"></div><div style="left:2854px;top:386px;width:56px;height:56px;background:linear-gradient(90deg,#e8b35a,#9cae8e 45%,#50aae4);"></div><svg style="position:absolute;left:2916px;top:410px;" width="12" height="8" viewBox="0 0 12 8"><path d="M1 1h10l-5 6z" fill="#cfcfcf"/></svg><svg style="position:absolute;left:2853px;top:457px;" width="56" height="57" viewBox="0 0 56 57"><rect x="19.4" y="19.4" width="35.8" height="35.3" fill="#fff" stroke="#2a2a2a" stroke-width="1.3"/><rect x="31.3" y="31.5" width="12.5" height="12.5" fill="#555" stroke="#1e1e1e" stroke-width="2.6"/><path d="M20.5 54L54.5 20" stroke="#de3a2e" stroke-width="3"/><rect x="0.6" y="0.6" width="35.3" height="35.4" fill="#fff" stroke="#2a2a2a" stroke-width="1.2"/><rect x="3.6" y="3.6" width="29.4" height="29.6" fill="#2e2d93"/></svg><svg style="position:absolute;left:2860px;top:530px;" width="34" height="30" viewBox="0 0 34 30"><rect x="2" y="2" width="14" height="10" fill="#6a6a6a" stroke="#777" stroke-width="1.5"/><rect x="14" y="16" width="14" height="10" fill="#6a6a6a" stroke="#777" stroke-width="1.5"/><path d="M20 4h10l-5 5zM2 26h10l-5-6z" fill="#777"/></svg><div class="t" style="left:2957.0px;top:396.0px;font-size:20.04px;-webkit-text-stroke:0.35px #d6d6d6;color:#d6d6d6;">Type:</div><div style="left:3014px;top:385px;width:137px;height:43px;background:#535353;border:1.5px solid #5f5f5f;border-radius:5px;box-sizing:border-box;"></div><div style="left:3058px;top:386px;width:1.5px;height:41px;background:#5f5f5f;"></div><div style="left:3104px;top:386px;width:1.5px;height:41px;background:#5f5f5f;"></div><div style="left:3021px;top:392px;width:30px;height:30px;box-sizing:border-box;border:2.5px solid #d6d6d6;background:linear-gradient(90deg,#262626,#d8d8d8);"></div><div style="left:3067px;top:392px;width:30px;height:30px;box-sizing:border-box;border:2.5px solid #d6d6d6;background:radial-gradient(circle at 50% 50%,#e8e8e8 0,#8a8a8a 45%,#2a2a2a 100%);"></div><div style="left:3114px;top:392px;width:30px;height:30px;box-sizing:border-box;border:2.5px solid #d6d6d6;background:radial-gradient(ellipse at 50% 50%,#999 0,#555 60%,#222 100%);"></div><svg style="position:absolute;left:3116px;top:394px;" width="26" height="26" viewBox="0 0 26 26"><path d="M2 18c4-4 8-2 11-3s5-6 9-8" fill="none" stroke="#d8d8d8" stroke-width="3.5" stroke-linecap="round" opacity="0.85"/></svg><div class="t" style="left:2944.0px;top:450.4px;font-size:19.57px;-webkit-text-stroke:0.35px #8a8a8a;color:#8a8a8a;">Stroke:</div><div style="left:3014px;top:439px;width:127px;height:41px;background:#535353;border:1.5px solid #5c5c5c;border-radius:5px;box-sizing:border-box;"></div><div style="left:3054px;top:440px;width:1.5px;height:39px;background:#5c5c5c;"></div><div style="left:3098px;top:440px;width:1.5px;height:39px;background:#5c5c5c;"></div><svg style="position:absolute;left:3021px;top:446px;" width="28" height="28" viewBox="0 0 28 28"><defs><linearGradient id="lg3021" x1="0" y1="0" x2="1" y2="0"><stop offset="0" stop-color="#4a4a4a"/><stop offset="1" stop-color="#7a7a7a"/></linearGradient></defs><path d="M1.5 26.5V1.5h24.5v11.5H12.5v13.5z" fill="url(#lg3021)" stroke="#6e6e6e" stroke-width="1.8"/></svg><svg style="position:absolute;left:3064px;top:446px;" width="28" height="28" viewBox="0 0 28 28"><defs><linearGradient id="lg3064" x1="0" y1="0" x2="1" y2="0"><stop offset="0" stop-color="#4a4a4a"/><stop offset="1" stop-color="#7a7a7a"/></linearGradient></defs><path d="M1.5 26.5V1.5h24.5v11.5H12.5v13.5z" fill="url(#lg3064)" stroke="#6e6e6e" stroke-width="1.8"/></svg><svg style="position:absolute;left:3107px;top:446px;" width="28" height="28" viewBox="0 0 28 28"><defs><linearGradient id="lg3107" x1="0" y1="0" x2="1" y2="0"><stop offset="0" stop-color="#4a4a4a"/><stop offset="1" stop-color="#7a7a7a"/></linearGradient></defs><path d="M1.5 26.5V1.5h24.5v11.5H12.5v13.5z" fill="url(#lg3107)" stroke="#6e6e6e" stroke-width="1.8"/></svg><svg style="position:absolute;left:2976px;top:494px;" width="30" height="25" viewBox="0 0 30 25"><path d="M2 23h26M2 23L20 2M14 12a8 8 0 0 1 5 11" fill="none" stroke="#8a8a8a" stroke-width="2"/></svg><div style="left:3014px;top:489px;width:145px;height:40px;background:#585858;border-radius:4px;"></div><svg style="position:absolute;left:3134px;top:504px;" width="14" height="10" viewBox="0 0 14 10"><path d="M1 2l6.0 6.0l6.0 -6.0" fill="none" stroke="#747474" stroke-width="2.2"/></svg><svg style="position:absolute;left:2973px;top:542px;" width="34" height="30" viewBox="0 0 34 30"><path d="M6 1v26M2 5l4-4 4 4M2 23l4 4 4-4" fill="none" stroke="#8a8a8a" stroke-width="2"/><ellipse cx="22" cy="12" rx="10" ry="7" fill="none" stroke="#8a8a8a" stroke-width="2"/><path d="M12 25h20M12 22v6M32 22v6" fill="none" stroke="#8a8a8a" stroke-width="2"/></svg><div style="left:3014px;top:538px;width:145px;height:39px;background:#585858;border-radius:4px;"></div><svg style="position:absolute;left:3134px;top:552px;" width="14" height="10" viewBox="0 0 14 10"><path d="M1 2l6.0 6.0l6.0 -6.0" fill="none" stroke="#747474" stroke-width="2.2"/></svg><div style="left:2870px;top:615px;width:371px;height:30px;background:#2a2a2a;"></div><div style="left:2871px;top:616px;width:369px;height:28px;background:linear-gradient(90deg,#e9b45a 0%,#a9ae7a 33%,#89ab95 48%,#6faab2 65%,#58aad5 82%,#4eaae8 100%);"></div><svg style="position:absolute;left:3267px;top:620px;" width="24" height="26" viewBox="0 0 24 26"><path d="M2 5h20M8 5V2h8v3M4 5l2 19h12l2-19M9 9v12M12 9v12M15 9v12" fill="none" stroke="#6f6f6f" stroke-width="2"/></svg><svg style="position:absolute;left:2863px;top:706px;" width="36" height="36" viewBox="0 0 36 36"><path d="M26 3c3-3 8 2 5 5l-4 4 2 2-3 3-10-10 3-3 2 2z" fill="#6f6f6f"/><path d="M16 13L5 27c-2 3 1 6 4 4l13-12" fill="none" stroke="#6f6f6f" stroke-width="2.2"/></svg><div class="t" style="left:2933.0px;top:691.2px;font-size:19.90px;-webkit-text-stroke:0.35px #8a8a8a;color:#8a8a8a;">Opacity:</div><div style="left:3014px;top:681px;width:145px;height:39px;background:#585858;border-radius:4px;"></div><svg style="position:absolute;left:3134px;top:696px;" width="14" height="10" viewBox="0 0 14 10"><path d="M1 2l6.0 6.0l6.0 -6.0" fill="none" stroke="#747474" stroke-width="2.2"/></svg><div class="t" style="left:2924.0px;top:739.9px;font-size:20.21px;-webkit-text-stroke:0.35px #8a8a8a;color:#8a8a8a;">Location:</div><div style="left:3014px;top:730px;width:145px;height:39px;background:#585858;border-radius:4px;"></div><svg style="position:absolute;left:3134px;top:745px;" width="14" height="10" viewBox="0 0 14 10"><path d="M1 2l6.0 6.0l6.0 -6.0" fill="none" stroke="#747474" stroke-width="2.2"/></svg><div style="left:2841px;top:778px;width:471px;height:3px;background:#3a3a3a;"></div><div style="left:2841px;top:781px;width:471px;height:12px;background:#505050;"></div><div style="left:2841px;top:793px;width:471px;height:2px;background:#333;"></div><div style="left:3058px;top:783px;width:36px;height:8px;background:repeating-linear-gradient(90deg,#2e2e2e 0 2px,transparent 2px 3px);"></div><div style="left:3547px;top:1877px;width:206px;height:206px;background:#ffffff;border-radius:50%;box-shadow:inset 0 0 8px rgba(0,0,0,0.12);"></div><svg style="position:absolute;left:3595px;top:1940px;" width="110" height="80" viewBox="0 0 110 80"><path d="M28 6L6 39.3 32 74h46.5L105 39.3 82.8 6 55.2 42.2z" fill="#cc0000"/></svg><div style="left:2841px;top:297px;width:1.2px;height:498px;background:#383838;"></div><div style="left:0;top:47px;width:3840px;height:2113px;box-sizing:border-box;border:1.5px solid #2c2c2c;border-bottom:none;border-radius:12px 12px 0 0;"></div><div style="left:0px;top:2158px;width:3840px;height:2px;background:#2e2e2e;"></div><svg style="position:absolute;left:2070px;top:457px;" width="32" height="40" viewBox="0 0 32 40"><path d="M4 4.5v31l9-8.5h12z" fill="#000" stroke="#fff" stroke-width="2" stroke-linejoin="miter"/></svg>
</body></html>
